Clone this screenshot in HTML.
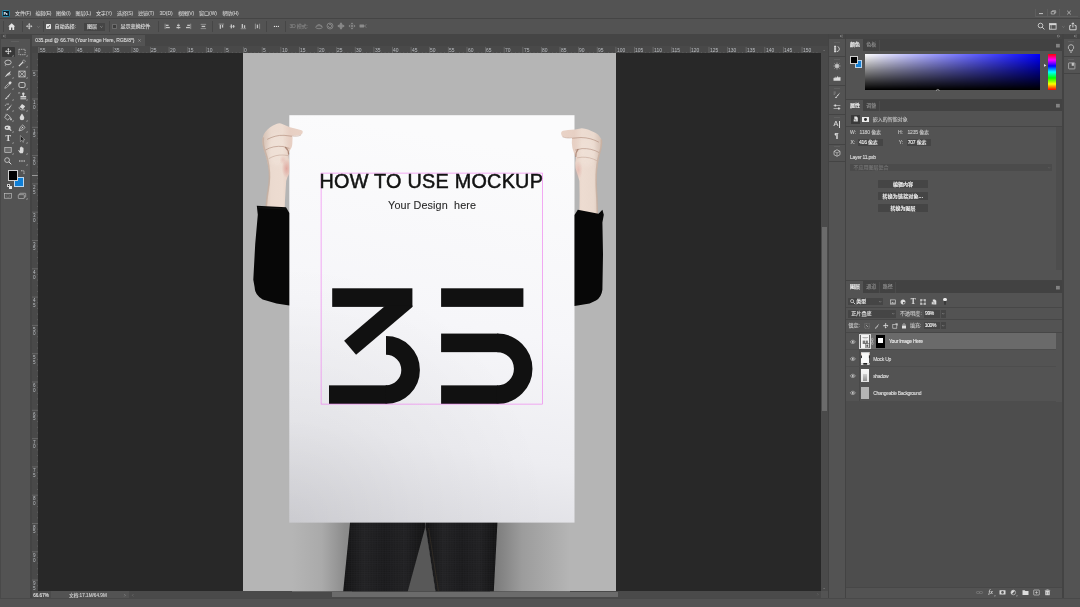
<!DOCTYPE html>
<html lang="zh-CN"><head><meta charset="utf-8"><title>035.psd</title>
<style>
html,body{margin:0;padding:0}
body{width:1080px;height:607px;overflow:hidden;background:#535353;position:relative;font-family:"Liberation Sans","Noto Sans CJK SC",sans-serif;font-size:5px;color:#d8d8d8;-webkit-font-smoothing:antialiased}
#app{position:absolute;left:0;top:0;width:1080px;height:607px;opacity:0.999}
.t{position:absolute;white-space:pre;line-height:10px;height:10px;-webkit-text-stroke:0.12px currentColor}
svg{overflow:visible}
</style></head>
<body>
<div id="app">
<div style="position:absolute;left:0.00px;top:0.00px;width:1080.00px;height:607.00px;background:#535353;"></div><div style="position:absolute;left:2.2px;top:10.0px;width:5.5px;height:5.3px;border:0.75px solid #2688ab;border-radius:1.3px;background:#0a1f2b"></div><div class="t" style="left:3.75px;top:8.70px;font-size:3.10px;color:#eef8ff;font-weight:bold;">Ps</div><div class="t" style="left:15.00px;top:8.10px;font-size:5.05px;color:#d6d6d6;letter-spacing:-0.109px;-webkit-text-stroke:0.05px currentColor;">文件(F)</div><div class="t" style="left:35.50px;top:8.10px;font-size:5.05px;color:#d6d6d6;letter-spacing:-0.206px;-webkit-text-stroke:0.05px currentColor;">编辑(E)</div><div class="t" style="left:56.00px;top:8.10px;font-size:5.05px;color:#d6d6d6;letter-spacing:-0.052px;-webkit-text-stroke:0.05px currentColor;">图像(I)</div><div class="t" style="left:75.50px;top:8.10px;font-size:5.05px;color:#d6d6d6;letter-spacing:-0.153px;-webkit-text-stroke:0.05px currentColor;">图层(L)</div><div class="t" style="left:96.00px;top:8.10px;font-size:5.05px;color:#d6d6d6;letter-spacing:-0.206px;-webkit-text-stroke:0.05px currentColor;">文字(Y)</div><div class="t" style="left:117.00px;top:8.10px;font-size:5.05px;color:#d6d6d6;letter-spacing:-0.166px;-webkit-text-stroke:0.05px currentColor;">选择(S)</div><div class="t" style="left:138.00px;top:8.10px;font-size:5.05px;color:#d6d6d6;letter-spacing:-0.109px;-webkit-text-stroke:0.05px currentColor;">滤镜(T)</div><div class="t" style="left:159.60px;top:8.10px;font-size:5.05px;color:#d6d6d6;letter-spacing:-0.094px;-webkit-text-stroke:0.05px currentColor;">3D(D)</div><div class="t" style="left:178.00px;top:8.10px;font-size:5.05px;color:#d6d6d6;letter-spacing:-0.166px;-webkit-text-stroke:0.05px currentColor;">视图(V)</div><div class="t" style="left:199.00px;top:8.10px;font-size:5.05px;color:#d6d6d6;letter-spacing:-0.044px;-webkit-text-stroke:0.05px currentColor;">窗口(W)</div><div class="t" style="left:222.20px;top:8.10px;font-size:5.05px;color:#d6d6d6;letter-spacing:-0.162px;-webkit-text-stroke:0.05px currentColor;">帮助(H)</div><div style="position:absolute;left:1035.30px;top:8.50px;width:0.60px;height:8.00px;background:#5e5e5e;"></div><div style="position:absolute;left:1047.20px;top:8.50px;width:0.60px;height:8.00px;background:#5e5e5e;"></div><div style="position:absolute;left:1058.60px;top:8.50px;width:0.60px;height:8.00px;background:#5e5e5e;"></div><div style="position:absolute;left:1035.30px;top:16.20px;width:43.00px;height:0.60px;background:#5e5e5e;"></div><svg style="position:absolute;left:1036.00px;top:8.00px;" width="44.00" height="9.00" viewBox="0 0 44 9"><path d="M3 5.6h4" stroke="#d0d0d0" stroke-width="0.9" fill="none"/><path d="M15.2 3.6h3.4v2.4h-3.4z M16.4 3.6v-0.9h3.3v2.3h-1.1" stroke="#d0d0d0" stroke-width="0.6" fill="none"/><path d="M31.2 2.8l3.6 3.6m0-3.6l-3.6 3.6" stroke="#d0d0d0" stroke-width="0.7" fill="none"/></svg><div style="position:absolute;left:0.00px;top:17.60px;width:1080.00px;height:0.90px;background:#454545;"></div><div style="position:absolute;left:3.00px;top:21.00px;width:0.70px;height:11.00px;background:#464646;"></div><div style="position:absolute;left:22.00px;top:21.00px;width:0.70px;height:11.00px;background:#464646;"></div><div style="position:absolute;left:42.90px;top:21.00px;width:0.70px;height:11.00px;background:#464646;"></div><div style="position:absolute;left:108.70px;top:21.00px;width:0.70px;height:11.00px;background:#464646;"></div><div style="position:absolute;left:157.70px;top:21.00px;width:0.70px;height:11.00px;background:#464646;"></div><div style="position:absolute;left:212.30px;top:21.00px;width:0.70px;height:11.00px;background:#464646;"></div><div style="position:absolute;left:266.00px;top:21.00px;width:0.70px;height:11.00px;background:#464646;"></div><div style="position:absolute;left:284.90px;top:21.00px;width:0.70px;height:11.00px;background:#464646;"></div><svg style="position:absolute;left:8.40px;top:22.80px;" width="7.40" height="7.20" viewBox="0 0 7.4 7.2"><path d="M3.7 0.3L0.2 3.5h1v3.4h1.8V4.6h1.4v2.3h1.8V3.5h1z" fill="#e4e4e4"/></svg><svg style="position:absolute;left:25.90px;top:23.30px;" width="6.40" height="6.40" viewBox="0 0 8 8"><path d="M4 0L5.500 1.900H4.500V3.500H6.100V2.500L8 4L6.100 5.500V4.500H4.500V6.100H5.500L4 8L2.500 6.100H3.500V4.500H1.900V5.500L0 4L1.900 2.500V3.500H3.500V1.900H2.500Z" fill="#d2d2d2"/></svg><svg style="position:absolute;left:36.60px;top:25.60px;" width="3.00" height="2.00" viewBox="0 0 3 2"><path d="M0.2 0.3l1.3 1.3 1.3-1.3" stroke="#8a8a8a" stroke-width="0.55" fill="none"/></svg><div style="position:absolute;left:46.30px;top:24.30px;width:4.70px;height:4.70px;background:#e6e6e6;border-radius:0.7px"></div><svg style="position:absolute;left:46.30px;top:24.30px;" width="4.70" height="4.70" viewBox="0 0 4.7 4.7"><path d="M1 2.5l1.1 1.1L3.8 1.2" stroke="#3a3a3a" stroke-width="0.9" fill="none"/></svg><div class="t" style="left:54.50px;top:20.80px;font-size:5.10px;color:#dcdcdc;letter-spacing:-0.099px;">自动选择:</div><div style="position:absolute;left:84.00px;top:22.90px;width:20.60px;height:7.80px;background:#454545;border-radius:0.6px"></div><div class="t" style="left:87.00px;top:20.80px;font-size:5.10px;color:#dcdcdc;">图层</div><svg style="position:absolute;left:100.40px;top:26.00px;" width="3.00" height="2.00" viewBox="0 0 3 2"><path d="M0.3 0.3l1.1 1.1 1.1-1.1" stroke="#bdbdbd" stroke-width="0.55" fill="none"/></svg><div style="position:absolute;left:112.30px;top:24.20px;width:4.90px;height:4.80px;background:#3d3d3d;border:0.5px solid #6c6c6c;box-sizing:border-box;border-radius:0.6px"></div><div class="t" style="left:120.50px;top:20.80px;font-size:5.10px;color:#dcdcdc;letter-spacing:-0.130px;">显示变换控件</div><svg style="position:absolute;left:163.90px;top:23.10px;" width="6.80" height="6.80" viewBox="0 0 8 8"><path d="M1.3 0.8v6.4" stroke="#c6c6c6" stroke-width="0.6"/><rect x="2.2" y="2" width="3.2" height="1.5" fill="#c6c6c6"/><rect x="2.2" y="4.6" width="4.6" height="1.5" fill="#c6c6c6"/></svg><svg style="position:absolute;left:174.60px;top:23.10px;" width="6.80" height="6.80" viewBox="0 0 8 8"><path d="M4 0.8v6.4" stroke="#c6c6c6" stroke-width="0.6"/><rect x="2.4" y="2" width="3.2" height="1.5" fill="#c6c6c6"/><rect x="1.7" y="4.6" width="4.6" height="1.5" fill="#c6c6c6"/></svg><svg style="position:absolute;left:185.30px;top:23.10px;" width="6.80" height="6.80" viewBox="0 0 8 8"><path d="M6.7 0.8v6.4" stroke="#c6c6c6" stroke-width="0.6"/><rect x="2.6" y="2" width="3.2" height="1.5" fill="#c6c6c6"/><rect x="1.2" y="4.6" width="4.6" height="1.5" fill="#c6c6c6"/></svg><svg style="position:absolute;left:200.00px;top:23.10px;" width="6.80" height="6.80" viewBox="0 0 8 8"><path d="M0.8 1.6h6.4M0.8 6.6h6.4" stroke="#c6c6c6" stroke-width="0.6"/><rect x="1.9" y="3.3" width="4.2" height="1.5" fill="#c6c6c6"/></svg><svg style="position:absolute;left:218.00px;top:23.10px;" width="6.80" height="6.80" viewBox="0 0 8 8"><path d="M0.8 1.3h6.4" stroke="#c6c6c6" stroke-width="0.6"/><rect x="2" y="2.2" width="1.5" height="4.6" fill="#c6c6c6"/><rect x="4.6" y="2.2" width="1.5" height="3.2" fill="#c6c6c6"/></svg><svg style="position:absolute;left:229.00px;top:23.10px;" width="6.80" height="6.80" viewBox="0 0 8 8"><path d="M0.8 4h6.4" stroke="#c6c6c6" stroke-width="0.6"/><rect x="2" y="1.7" width="1.5" height="4.6" fill="#c6c6c6"/><rect x="4.6" y="2.4" width="1.5" height="3.2" fill="#c6c6c6"/></svg><svg style="position:absolute;left:239.80px;top:23.10px;" width="6.80" height="6.80" viewBox="0 0 8 8"><path d="M0.8 6.7h6.4" stroke="#c6c6c6" stroke-width="0.6"/><rect x="2" y="1.2" width="1.5" height="4.6" fill="#c6c6c6"/><rect x="4.6" y="2.6" width="1.5" height="3.2" fill="#c6c6c6"/></svg><svg style="position:absolute;left:254.40px;top:23.10px;" width="6.80" height="6.80" viewBox="0 0 8 8"><path d="M1.6 0.8v6.4M6.6 0.8v6.4" stroke="#c6c6c6" stroke-width="0.6"/><rect x="3.3" y="1.9" width="1.5" height="4.2" fill="#c6c6c6"/></svg><svg style="position:absolute;left:272.50px;top:23.10px;" width="6.80" height="6.80" viewBox="0 0 8 8"><circle cx="1.7" cy="4" r="0.75" fill="#e8e8e8"/><circle cx="4" cy="4" r="0.75" fill="#e8e8e8"/><circle cx="6.3" cy="4" r="0.75" fill="#e8e8e8"/></svg><div class="t" style="left:289.40px;top:20.80px;font-size:5.10px;color:#838383;letter-spacing:-0.222px;">3D 模式:</div><svg style="position:absolute;left:314.80px;top:22.40px;" width="8.00" height="8.00" viewBox="0 0 8 8"><ellipse cx="4" cy="5.200" rx="3.300" ry="1.500" fill="none" stroke="#8c8c8c" stroke-width="0.8"/><path d="M1.600 4.300A2.500 2.500 0 0 1 6.400 4.300" fill="none" stroke="#8c8c8c" stroke-width="0.8"/><path d="M6.800 3.200l0.600 1.600l-1.600 0z" fill="#8c8c8c"/></svg><svg style="position:absolute;left:325.80px;top:22.40px;" width="8.00" height="8.00" viewBox="0 0 8 8"><circle cx="4" cy="4" r="3" fill="none" stroke="#8c8c8c" stroke-width="0.8"/><path d="M2.300 4A1.700 1.700 0 1 0 4 2.300" fill="none" stroke="#8c8c8c" stroke-width="0.8"/><path d="M4.200 1.300l-1.300 1l1.300 1z" fill="#8c8c8c"/></svg><svg style="position:absolute;left:336.80px;top:22.40px;" width="8.00" height="8.00" viewBox="0 0 8 8"><path d="M4 0.300L5.700 2.400H4.800V3.200H5.600V2.300L7.700 4L5.600 5.700V4.800H4.800V5.600H5.700L4 7.700L2.300 5.600H3.200V4.800H2.400V5.700L0.300 4L2.400 2.300V3.200H3.200V2.400H2.300Z" fill="#8c8c8c"/></svg><svg style="position:absolute;left:347.90px;top:22.40px;" width="8.00" height="8.00" viewBox="0 0 8 8"><path d="M4 0.500l1.500 1.700H2.500zM4 7.500l1.500-1.700H2.500zM0.500 4l1.700-1.500v3zM7.500 4L5.800 2.500v3z" fill="#8c8c8c"/><circle cx="4" cy="4" r="1" fill="#8c8c8c"/></svg><svg style="position:absolute;left:358.90px;top:22.40px;" width="8.00" height="8.00" viewBox="0 0 8 8"><rect x="0.500" y="2.600" width="4.600" height="2.900" rx="0.4" fill="#8c8c8c"/><path d="M5.300 4l2.200-1.500M5.300 4l2.200 1.500" fill="none" stroke="#8c8c8c" stroke-width="0.6"/></svg><svg style="position:absolute;left:1036.50px;top:22.40px;" width="8.50" height="8.50" viewBox="0 0 8.5 8.5"><circle cx="3.5" cy="3.5" r="2.3" fill="none" stroke="#dedede" stroke-width="0.8"/><path d="M5.2 5.2l2.2 2.2" stroke="#dedede" stroke-width="0.9"/></svg><svg style="position:absolute;left:1049.40px;top:23.00px;" width="8.00" height="7.50" viewBox="0 0 8 7.5"><rect x="0.5" y="0.6" width="6.6" height="5.6" fill="none" stroke="#dedede" stroke-width="0.8"/><path d="M0.5 1.6h6.6" stroke="#dedede" stroke-width="1.1"/><path d="M2.2 1.6v4.6" stroke="#dedede" stroke-width="0.5"/></svg><svg style="position:absolute;left:1061.60px;top:26.00px;" width="3.00" height="2.00" viewBox="0 0 3 2"><path d="M0.3 0.3l1.1 1.1 1.1-1.1" stroke="#8a8a8a" stroke-width="0.55" fill="none"/></svg><svg style="position:absolute;left:1068.60px;top:22.00px;" width="8.00" height="8.60" viewBox="0 0 8 8.6"><path d="M2.2 3.6H0.7v4.2h6.4V3.6H5.6" fill="none" stroke="#e6e6e6" stroke-width="0.85"/><path d="M3.9 5.4V0.9M2.5 2.2l1.4-1.4 1.4 1.4" fill="none" stroke="#e6e6e6" stroke-width="0.85"/></svg><div style="position:absolute;left:0.00px;top:33.90px;width:1080.00px;height:5.00px;background:#454545;"></div><div style="position:absolute;left:31.50px;top:33.90px;width:797.00px;height:12.80px;background:#454545;"></div><svg style="position:absolute;left:3.00px;top:35.30px;" width="2.80" height="2.20" viewBox="0 0 2.8 2.2"><path d="M1.2 0L0 1.1 1.2 2.2M2.7 0L1.5 1.1 2.7 2.2" stroke="#b4b4b4" stroke-width="0.5" fill="none"/></svg><svg style="position:absolute;left:839.60px;top:35.30px;" width="2.80" height="2.20" viewBox="0 0 2.8 2.2"><path d="M1.2 0L0 1.1 1.2 2.2M2.7 0L1.5 1.1 2.7 2.2" stroke="#b4b4b4" stroke-width="0.5" fill="none"/></svg><svg style="position:absolute;left:1057.20px;top:35.30px;" width="2.80" height="2.20" viewBox="0 0 2.8 2.2"><path d="M0 0l1.2 1.1L0 2.2M1.5 0l1.2 1.1-1.2 1.1" stroke="#b4b4b4" stroke-width="0.5" fill="none"/></svg><svg style="position:absolute;left:1074.20px;top:35.30px;" width="2.80" height="2.20" viewBox="0 0 2.8 2.2"><path d="M1.2 0L0 1.1 1.2 2.2M2.7 0L1.5 1.1 2.7 2.2" stroke="#b4b4b4" stroke-width="0.5" fill="none"/></svg><div style="position:absolute;left:32.20px;top:34.90px;width:112.40px;height:11.80px;background:#535353;"></div><div class="t" style="left:35.20px;top:35.20px;font-size:5.00px;color:#dadada;letter-spacing:-0.066px;">035.psd @ 66.7% (Your Image Here, RGB/8*)</div><svg style="position:absolute;left:137.60px;top:39.30px;" width="3.00" height="3.00" viewBox="0 0 3 3"><path d="M0.3 0.3l2.3 2.3m0-2.3L0.3 2.6" stroke="#b8b8b8" stroke-width="0.5"/></svg><div style="position:absolute;left:31.50px;top:46.70px;width:797.00px;height:6.70px;background:#494949;"></div><div style="position:absolute;left:31.50px;top:53.40px;width:6.70px;height:538.00px;background:#494949;"></div><div style="position:absolute;left:31.50px;top:46.70px;width:6.20px;height:6.40px;background:#464646;"></div><div style="position:absolute;left:31.50px;top:46.40px;width:797.00px;height:0.50px;background:#494949;"></div><svg style="position:absolute;left:0;top:0" width="1080" height="60"><path d="M38.84 46.9v6.4" stroke="#8b8b8b" stroke-width="0.45"/><path d="M42.56 52.2v1.1" stroke="#7c7c7c" stroke-width="0.45"/><path d="M46.28 52.2v1.1" stroke="#7c7c7c" stroke-width="0.45"/><path d="M50.00 52.2v1.1" stroke="#7c7c7c" stroke-width="0.45"/><path d="M53.73 52.2v1.1" stroke="#7c7c7c" stroke-width="0.45"/><path d="M57.45 46.9v6.4" stroke="#8b8b8b" stroke-width="0.45"/><path d="M61.17 52.2v1.1" stroke="#7c7c7c" stroke-width="0.45"/><path d="M64.90 52.2v1.1" stroke="#7c7c7c" stroke-width="0.45"/><path d="M68.62 52.2v1.1" stroke="#7c7c7c" stroke-width="0.45"/><path d="M72.34 52.2v1.1" stroke="#7c7c7c" stroke-width="0.45"/><path d="M76.06 46.9v6.4" stroke="#8b8b8b" stroke-width="0.45"/><path d="M79.79 52.2v1.1" stroke="#7c7c7c" stroke-width="0.45"/><path d="M83.51 52.2v1.1" stroke="#7c7c7c" stroke-width="0.45"/><path d="M87.23 52.2v1.1" stroke="#7c7c7c" stroke-width="0.45"/><path d="M90.96 52.2v1.1" stroke="#7c7c7c" stroke-width="0.45"/><path d="M94.68 46.9v6.4" stroke="#8b8b8b" stroke-width="0.45"/><path d="M98.40 52.2v1.1" stroke="#7c7c7c" stroke-width="0.45"/><path d="M102.13 52.2v1.1" stroke="#7c7c7c" stroke-width="0.45"/><path d="M105.85 52.2v1.1" stroke="#7c7c7c" stroke-width="0.45"/><path d="M109.57 52.2v1.1" stroke="#7c7c7c" stroke-width="0.45"/><path d="M113.29 46.9v6.4" stroke="#8b8b8b" stroke-width="0.45"/><path d="M117.02 52.2v1.1" stroke="#7c7c7c" stroke-width="0.45"/><path d="M120.74 52.2v1.1" stroke="#7c7c7c" stroke-width="0.45"/><path d="M124.46 52.2v1.1" stroke="#7c7c7c" stroke-width="0.45"/><path d="M128.19 52.2v1.1" stroke="#7c7c7c" stroke-width="0.45"/><path d="M131.91 46.9v6.4" stroke="#8b8b8b" stroke-width="0.45"/><path d="M135.63 52.2v1.1" stroke="#7c7c7c" stroke-width="0.45"/><path d="M139.36 52.2v1.1" stroke="#7c7c7c" stroke-width="0.45"/><path d="M143.08 52.2v1.1" stroke="#7c7c7c" stroke-width="0.45"/><path d="M146.80 52.2v1.1" stroke="#7c7c7c" stroke-width="0.45"/><path d="M150.52 46.9v6.4" stroke="#8b8b8b" stroke-width="0.45"/><path d="M154.25 52.2v1.1" stroke="#7c7c7c" stroke-width="0.45"/><path d="M157.97 52.2v1.1" stroke="#7c7c7c" stroke-width="0.45"/><path d="M161.69 52.2v1.1" stroke="#7c7c7c" stroke-width="0.45"/><path d="M165.42 52.2v1.1" stroke="#7c7c7c" stroke-width="0.45"/><path d="M169.14 46.9v6.4" stroke="#8b8b8b" stroke-width="0.45"/><path d="M172.86 52.2v1.1" stroke="#7c7c7c" stroke-width="0.45"/><path d="M176.59 52.2v1.1" stroke="#7c7c7c" stroke-width="0.45"/><path d="M180.31 52.2v1.1" stroke="#7c7c7c" stroke-width="0.45"/><path d="M184.03 52.2v1.1" stroke="#7c7c7c" stroke-width="0.45"/><path d="M187.75 46.9v6.4" stroke="#8b8b8b" stroke-width="0.45"/><path d="M191.48 52.2v1.1" stroke="#7c7c7c" stroke-width="0.45"/><path d="M195.20 52.2v1.1" stroke="#7c7c7c" stroke-width="0.45"/><path d="M198.92 52.2v1.1" stroke="#7c7c7c" stroke-width="0.45"/><path d="M202.65 52.2v1.1" stroke="#7c7c7c" stroke-width="0.45"/><path d="M206.37 46.9v6.4" stroke="#8b8b8b" stroke-width="0.45"/><path d="M210.09 52.2v1.1" stroke="#7c7c7c" stroke-width="0.45"/><path d="M213.82 52.2v1.1" stroke="#7c7c7c" stroke-width="0.45"/><path d="M217.54 52.2v1.1" stroke="#7c7c7c" stroke-width="0.45"/><path d="M221.26 52.2v1.1" stroke="#7c7c7c" stroke-width="0.45"/><path d="M224.98 46.9v6.4" stroke="#8b8b8b" stroke-width="0.45"/><path d="M228.71 52.2v1.1" stroke="#7c7c7c" stroke-width="0.45"/><path d="M232.43 52.2v1.1" stroke="#7c7c7c" stroke-width="0.45"/><path d="M236.15 52.2v1.1" stroke="#7c7c7c" stroke-width="0.45"/><path d="M239.88 52.2v1.1" stroke="#7c7c7c" stroke-width="0.45"/><path d="M243.60 46.9v6.4" stroke="#8b8b8b" stroke-width="0.45"/><path d="M247.32 52.2v1.1" stroke="#7c7c7c" stroke-width="0.45"/><path d="M251.05 52.2v1.1" stroke="#7c7c7c" stroke-width="0.45"/><path d="M254.77 52.2v1.1" stroke="#7c7c7c" stroke-width="0.45"/><path d="M258.49 52.2v1.1" stroke="#7c7c7c" stroke-width="0.45"/><path d="M262.21 46.9v6.4" stroke="#8b8b8b" stroke-width="0.45"/><path d="M265.94 52.2v1.1" stroke="#7c7c7c" stroke-width="0.45"/><path d="M269.66 52.2v1.1" stroke="#7c7c7c" stroke-width="0.45"/><path d="M273.38 52.2v1.1" stroke="#7c7c7c" stroke-width="0.45"/><path d="M277.11 52.2v1.1" stroke="#7c7c7c" stroke-width="0.45"/><path d="M280.83 46.9v6.4" stroke="#8b8b8b" stroke-width="0.45"/><path d="M284.55 52.2v1.1" stroke="#7c7c7c" stroke-width="0.45"/><path d="M288.28 52.2v1.1" stroke="#7c7c7c" stroke-width="0.45"/><path d="M292.00 52.2v1.1" stroke="#7c7c7c" stroke-width="0.45"/><path d="M295.72 52.2v1.1" stroke="#7c7c7c" stroke-width="0.45"/><path d="M299.44 46.9v6.4" stroke="#8b8b8b" stroke-width="0.45"/><path d="M303.17 52.2v1.1" stroke="#7c7c7c" stroke-width="0.45"/><path d="M306.89 52.2v1.1" stroke="#7c7c7c" stroke-width="0.45"/><path d="M310.61 52.2v1.1" stroke="#7c7c7c" stroke-width="0.45"/><path d="M314.34 52.2v1.1" stroke="#7c7c7c" stroke-width="0.45"/><path d="M318.06 46.9v6.4" stroke="#8b8b8b" stroke-width="0.45"/><path d="M321.78 52.2v1.1" stroke="#7c7c7c" stroke-width="0.45"/><path d="M325.51 52.2v1.1" stroke="#7c7c7c" stroke-width="0.45"/><path d="M329.23 52.2v1.1" stroke="#7c7c7c" stroke-width="0.45"/><path d="M332.95 52.2v1.1" stroke="#7c7c7c" stroke-width="0.45"/><path d="M336.68 46.9v6.4" stroke="#8b8b8b" stroke-width="0.45"/><path d="M340.40 52.2v1.1" stroke="#7c7c7c" stroke-width="0.45"/><path d="M344.12 52.2v1.1" stroke="#7c7c7c" stroke-width="0.45"/><path d="M347.84 52.2v1.1" stroke="#7c7c7c" stroke-width="0.45"/><path d="M351.57 52.2v1.1" stroke="#7c7c7c" stroke-width="0.45"/><path d="M355.29 46.9v6.4" stroke="#8b8b8b" stroke-width="0.45"/><path d="M359.01 52.2v1.1" stroke="#7c7c7c" stroke-width="0.45"/><path d="M362.74 52.2v1.1" stroke="#7c7c7c" stroke-width="0.45"/><path d="M366.46 52.2v1.1" stroke="#7c7c7c" stroke-width="0.45"/><path d="M370.18 52.2v1.1" stroke="#7c7c7c" stroke-width="0.45"/><path d="M373.90 46.9v6.4" stroke="#8b8b8b" stroke-width="0.45"/><path d="M377.63 52.2v1.1" stroke="#7c7c7c" stroke-width="0.45"/><path d="M381.35 52.2v1.1" stroke="#7c7c7c" stroke-width="0.45"/><path d="M385.07 52.2v1.1" stroke="#7c7c7c" stroke-width="0.45"/><path d="M388.80 52.2v1.1" stroke="#7c7c7c" stroke-width="0.45"/><path d="M392.52 46.9v6.4" stroke="#8b8b8b" stroke-width="0.45"/><path d="M396.24 52.2v1.1" stroke="#7c7c7c" stroke-width="0.45"/><path d="M399.97 52.2v1.1" stroke="#7c7c7c" stroke-width="0.45"/><path d="M403.69 52.2v1.1" stroke="#7c7c7c" stroke-width="0.45"/><path d="M407.41 52.2v1.1" stroke="#7c7c7c" stroke-width="0.45"/><path d="M411.13 46.9v6.4" stroke="#8b8b8b" stroke-width="0.45"/><path d="M414.86 52.2v1.1" stroke="#7c7c7c" stroke-width="0.45"/><path d="M418.58 52.2v1.1" stroke="#7c7c7c" stroke-width="0.45"/><path d="M422.30 52.2v1.1" stroke="#7c7c7c" stroke-width="0.45"/><path d="M426.03 52.2v1.1" stroke="#7c7c7c" stroke-width="0.45"/><path d="M429.75 46.9v6.4" stroke="#8b8b8b" stroke-width="0.45"/><path d="M433.47 52.2v1.1" stroke="#7c7c7c" stroke-width="0.45"/><path d="M437.20 52.2v1.1" stroke="#7c7c7c" stroke-width="0.45"/><path d="M440.92 52.2v1.1" stroke="#7c7c7c" stroke-width="0.45"/><path d="M444.64 52.2v1.1" stroke="#7c7c7c" stroke-width="0.45"/><path d="M448.37 46.9v6.4" stroke="#8b8b8b" stroke-width="0.45"/><path d="M452.09 52.2v1.1" stroke="#7c7c7c" stroke-width="0.45"/><path d="M455.81 52.2v1.1" stroke="#7c7c7c" stroke-width="0.45"/><path d="M459.53 52.2v1.1" stroke="#7c7c7c" stroke-width="0.45"/><path d="M463.26 52.2v1.1" stroke="#7c7c7c" stroke-width="0.45"/><path d="M466.98 46.9v6.4" stroke="#8b8b8b" stroke-width="0.45"/><path d="M470.70 52.2v1.1" stroke="#7c7c7c" stroke-width="0.45"/><path d="M474.43 52.2v1.1" stroke="#7c7c7c" stroke-width="0.45"/><path d="M478.15 52.2v1.1" stroke="#7c7c7c" stroke-width="0.45"/><path d="M481.87 52.2v1.1" stroke="#7c7c7c" stroke-width="0.45"/><path d="M485.60 46.9v6.4" stroke="#8b8b8b" stroke-width="0.45"/><path d="M489.32 52.2v1.1" stroke="#7c7c7c" stroke-width="0.45"/><path d="M493.04 52.2v1.1" stroke="#7c7c7c" stroke-width="0.45"/><path d="M496.76 52.2v1.1" stroke="#7c7c7c" stroke-width="0.45"/><path d="M500.49 52.2v1.1" stroke="#7c7c7c" stroke-width="0.45"/><path d="M504.21 46.9v6.4" stroke="#8b8b8b" stroke-width="0.45"/><path d="M507.93 52.2v1.1" stroke="#7c7c7c" stroke-width="0.45"/><path d="M511.66 52.2v1.1" stroke="#7c7c7c" stroke-width="0.45"/><path d="M515.38 52.2v1.1" stroke="#7c7c7c" stroke-width="0.45"/><path d="M519.10 52.2v1.1" stroke="#7c7c7c" stroke-width="0.45"/><path d="M522.82 46.9v6.4" stroke="#8b8b8b" stroke-width="0.45"/><path d="M526.55 52.2v1.1" stroke="#7c7c7c" stroke-width="0.45"/><path d="M530.27 52.2v1.1" stroke="#7c7c7c" stroke-width="0.45"/><path d="M533.99 52.2v1.1" stroke="#7c7c7c" stroke-width="0.45"/><path d="M537.72 52.2v1.1" stroke="#7c7c7c" stroke-width="0.45"/><path d="M541.44 46.9v6.4" stroke="#8b8b8b" stroke-width="0.45"/><path d="M545.16 52.2v1.1" stroke="#7c7c7c" stroke-width="0.45"/><path d="M548.89 52.2v1.1" stroke="#7c7c7c" stroke-width="0.45"/><path d="M552.61 52.2v1.1" stroke="#7c7c7c" stroke-width="0.45"/><path d="M556.33 52.2v1.1" stroke="#7c7c7c" stroke-width="0.45"/><path d="M560.05 46.9v6.4" stroke="#8b8b8b" stroke-width="0.45"/><path d="M563.78 52.2v1.1" stroke="#7c7c7c" stroke-width="0.45"/><path d="M567.50 52.2v1.1" stroke="#7c7c7c" stroke-width="0.45"/><path d="M571.22 52.2v1.1" stroke="#7c7c7c" stroke-width="0.45"/><path d="M574.95 52.2v1.1" stroke="#7c7c7c" stroke-width="0.45"/><path d="M578.67 46.9v6.4" stroke="#8b8b8b" stroke-width="0.45"/><path d="M582.39 52.2v1.1" stroke="#7c7c7c" stroke-width="0.45"/><path d="M586.12 52.2v1.1" stroke="#7c7c7c" stroke-width="0.45"/><path d="M589.84 52.2v1.1" stroke="#7c7c7c" stroke-width="0.45"/><path d="M593.56 52.2v1.1" stroke="#7c7c7c" stroke-width="0.45"/><path d="M597.28 46.9v6.4" stroke="#8b8b8b" stroke-width="0.45"/><path d="M601.01 52.2v1.1" stroke="#7c7c7c" stroke-width="0.45"/><path d="M604.73 52.2v1.1" stroke="#7c7c7c" stroke-width="0.45"/><path d="M608.45 52.2v1.1" stroke="#7c7c7c" stroke-width="0.45"/><path d="M612.18 52.2v1.1" stroke="#7c7c7c" stroke-width="0.45"/><path d="M615.90 46.9v6.4" stroke="#8b8b8b" stroke-width="0.45"/><path d="M619.62 52.2v1.1" stroke="#7c7c7c" stroke-width="0.45"/><path d="M623.35 52.2v1.1" stroke="#7c7c7c" stroke-width="0.45"/><path d="M627.07 52.2v1.1" stroke="#7c7c7c" stroke-width="0.45"/><path d="M630.79 52.2v1.1" stroke="#7c7c7c" stroke-width="0.45"/><path d="M634.51 46.9v6.4" stroke="#8b8b8b" stroke-width="0.45"/><path d="M638.24 52.2v1.1" stroke="#7c7c7c" stroke-width="0.45"/><path d="M641.96 52.2v1.1" stroke="#7c7c7c" stroke-width="0.45"/><path d="M645.68 52.2v1.1" stroke="#7c7c7c" stroke-width="0.45"/><path d="M649.41 52.2v1.1" stroke="#7c7c7c" stroke-width="0.45"/><path d="M653.13 46.9v6.4" stroke="#8b8b8b" stroke-width="0.45"/><path d="M656.85 52.2v1.1" stroke="#7c7c7c" stroke-width="0.45"/><path d="M660.58 52.2v1.1" stroke="#7c7c7c" stroke-width="0.45"/><path d="M664.30 52.2v1.1" stroke="#7c7c7c" stroke-width="0.45"/><path d="M668.02 52.2v1.1" stroke="#7c7c7c" stroke-width="0.45"/><path d="M671.75 46.9v6.4" stroke="#8b8b8b" stroke-width="0.45"/><path d="M675.47 52.2v1.1" stroke="#7c7c7c" stroke-width="0.45"/><path d="M679.19 52.2v1.1" stroke="#7c7c7c" stroke-width="0.45"/><path d="M682.91 52.2v1.1" stroke="#7c7c7c" stroke-width="0.45"/><path d="M686.64 52.2v1.1" stroke="#7c7c7c" stroke-width="0.45"/><path d="M690.36 46.9v6.4" stroke="#8b8b8b" stroke-width="0.45"/><path d="M694.08 52.2v1.1" stroke="#7c7c7c" stroke-width="0.45"/><path d="M697.81 52.2v1.1" stroke="#7c7c7c" stroke-width="0.45"/><path d="M701.53 52.2v1.1" stroke="#7c7c7c" stroke-width="0.45"/><path d="M705.25 52.2v1.1" stroke="#7c7c7c" stroke-width="0.45"/><path d="M708.98 46.9v6.4" stroke="#8b8b8b" stroke-width="0.45"/><path d="M712.70 52.2v1.1" stroke="#7c7c7c" stroke-width="0.45"/><path d="M716.42 52.2v1.1" stroke="#7c7c7c" stroke-width="0.45"/><path d="M720.14 52.2v1.1" stroke="#7c7c7c" stroke-width="0.45"/><path d="M723.87 52.2v1.1" stroke="#7c7c7c" stroke-width="0.45"/><path d="M727.59 46.9v6.4" stroke="#8b8b8b" stroke-width="0.45"/><path d="M731.31 52.2v1.1" stroke="#7c7c7c" stroke-width="0.45"/><path d="M735.04 52.2v1.1" stroke="#7c7c7c" stroke-width="0.45"/><path d="M738.76 52.2v1.1" stroke="#7c7c7c" stroke-width="0.45"/><path d="M742.48 52.2v1.1" stroke="#7c7c7c" stroke-width="0.45"/><path d="M746.20 46.9v6.4" stroke="#8b8b8b" stroke-width="0.45"/><path d="M749.93 52.2v1.1" stroke="#7c7c7c" stroke-width="0.45"/><path d="M753.65 52.2v1.1" stroke="#7c7c7c" stroke-width="0.45"/><path d="M757.37 52.2v1.1" stroke="#7c7c7c" stroke-width="0.45"/><path d="M761.10 52.2v1.1" stroke="#7c7c7c" stroke-width="0.45"/><path d="M764.82 46.9v6.4" stroke="#8b8b8b" stroke-width="0.45"/><path d="M768.54 52.2v1.1" stroke="#7c7c7c" stroke-width="0.45"/><path d="M772.27 52.2v1.1" stroke="#7c7c7c" stroke-width="0.45"/><path d="M775.99 52.2v1.1" stroke="#7c7c7c" stroke-width="0.45"/><path d="M779.71 52.2v1.1" stroke="#7c7c7c" stroke-width="0.45"/><path d="M783.44 46.9v6.4" stroke="#8b8b8b" stroke-width="0.45"/><path d="M787.16 52.2v1.1" stroke="#7c7c7c" stroke-width="0.45"/><path d="M790.88 52.2v1.1" stroke="#7c7c7c" stroke-width="0.45"/><path d="M794.60 52.2v1.1" stroke="#7c7c7c" stroke-width="0.45"/><path d="M798.33 52.2v1.1" stroke="#7c7c7c" stroke-width="0.45"/><path d="M802.05 46.9v6.4" stroke="#8b8b8b" stroke-width="0.45"/><path d="M805.77 52.2v1.1" stroke="#7c7c7c" stroke-width="0.45"/><path d="M809.50 52.2v1.1" stroke="#7c7c7c" stroke-width="0.45"/><path d="M813.22 52.2v1.1" stroke="#7c7c7c" stroke-width="0.45"/><path d="M816.94 52.2v1.1" stroke="#7c7c7c" stroke-width="0.45"/></svg><div class="t" style="left:39.54px;top:45.30px;font-size:6.20px;color:#b9bcc0;transform:scaleX(0.8);transform-origin:0 50%;-webkit-text-stroke:0;">55</div><div class="t" style="left:58.15px;top:45.30px;font-size:6.20px;color:#b9bcc0;transform:scaleX(0.8);transform-origin:0 50%;-webkit-text-stroke:0;">50</div><div class="t" style="left:76.77px;top:45.30px;font-size:6.20px;color:#b9bcc0;transform:scaleX(0.8);transform-origin:0 50%;-webkit-text-stroke:0;">45</div><div class="t" style="left:95.38px;top:45.30px;font-size:6.20px;color:#b9bcc0;transform:scaleX(0.8);transform-origin:0 50%;-webkit-text-stroke:0;">40</div><div class="t" style="left:113.99px;top:45.30px;font-size:6.20px;color:#b9bcc0;transform:scaleX(0.8);transform-origin:0 50%;-webkit-text-stroke:0;">35</div><div class="t" style="left:132.61px;top:45.30px;font-size:6.20px;color:#b9bcc0;transform:scaleX(0.8);transform-origin:0 50%;-webkit-text-stroke:0;">30</div><div class="t" style="left:151.22px;top:45.30px;font-size:6.20px;color:#b9bcc0;transform:scaleX(0.8);transform-origin:0 50%;-webkit-text-stroke:0;">25</div><div class="t" style="left:169.84px;top:45.30px;font-size:6.20px;color:#b9bcc0;transform:scaleX(0.8);transform-origin:0 50%;-webkit-text-stroke:0;">20</div><div class="t" style="left:188.45px;top:45.30px;font-size:6.20px;color:#b9bcc0;transform:scaleX(0.8);transform-origin:0 50%;-webkit-text-stroke:0;">15</div><div class="t" style="left:207.07px;top:45.30px;font-size:6.20px;color:#b9bcc0;transform:scaleX(0.8);transform-origin:0 50%;-webkit-text-stroke:0;">10</div><div class="t" style="left:225.68px;top:45.30px;font-size:6.20px;color:#b9bcc0;transform:scaleX(0.8);transform-origin:0 50%;-webkit-text-stroke:0;">5</div><div class="t" style="left:244.30px;top:45.30px;font-size:6.20px;color:#b9bcc0;transform:scaleX(0.8);transform-origin:0 50%;-webkit-text-stroke:0;">0</div><div class="t" style="left:262.91px;top:45.30px;font-size:6.20px;color:#b9bcc0;transform:scaleX(0.8);transform-origin:0 50%;-webkit-text-stroke:0;">5</div><div class="t" style="left:281.53px;top:45.30px;font-size:6.20px;color:#b9bcc0;transform:scaleX(0.8);transform-origin:0 50%;-webkit-text-stroke:0;">10</div><div class="t" style="left:300.14px;top:45.30px;font-size:6.20px;color:#b9bcc0;transform:scaleX(0.8);transform-origin:0 50%;-webkit-text-stroke:0;">15</div><div class="t" style="left:318.76px;top:45.30px;font-size:6.20px;color:#b9bcc0;transform:scaleX(0.8);transform-origin:0 50%;-webkit-text-stroke:0;">20</div><div class="t" style="left:337.38px;top:45.30px;font-size:6.20px;color:#b9bcc0;transform:scaleX(0.8);transform-origin:0 50%;-webkit-text-stroke:0;">25</div><div class="t" style="left:355.99px;top:45.30px;font-size:6.20px;color:#b9bcc0;transform:scaleX(0.8);transform-origin:0 50%;-webkit-text-stroke:0;">30</div><div class="t" style="left:374.60px;top:45.30px;font-size:6.20px;color:#b9bcc0;transform:scaleX(0.8);transform-origin:0 50%;-webkit-text-stroke:0;">35</div><div class="t" style="left:393.22px;top:45.30px;font-size:6.20px;color:#b9bcc0;transform:scaleX(0.8);transform-origin:0 50%;-webkit-text-stroke:0;">40</div><div class="t" style="left:411.83px;top:45.30px;font-size:6.20px;color:#b9bcc0;transform:scaleX(0.8);transform-origin:0 50%;-webkit-text-stroke:0;">45</div><div class="t" style="left:430.45px;top:45.30px;font-size:6.20px;color:#b9bcc0;transform:scaleX(0.8);transform-origin:0 50%;-webkit-text-stroke:0;">50</div><div class="t" style="left:449.06px;top:45.30px;font-size:6.20px;color:#b9bcc0;transform:scaleX(0.8);transform-origin:0 50%;-webkit-text-stroke:0;">55</div><div class="t" style="left:467.68px;top:45.30px;font-size:6.20px;color:#b9bcc0;transform:scaleX(0.8);transform-origin:0 50%;-webkit-text-stroke:0;">60</div><div class="t" style="left:486.30px;top:45.30px;font-size:6.20px;color:#b9bcc0;transform:scaleX(0.8);transform-origin:0 50%;-webkit-text-stroke:0;">65</div><div class="t" style="left:504.91px;top:45.30px;font-size:6.20px;color:#b9bcc0;transform:scaleX(0.8);transform-origin:0 50%;-webkit-text-stroke:0;">70</div><div class="t" style="left:523.52px;top:45.30px;font-size:6.20px;color:#b9bcc0;transform:scaleX(0.8);transform-origin:0 50%;-webkit-text-stroke:0;">75</div><div class="t" style="left:542.14px;top:45.30px;font-size:6.20px;color:#b9bcc0;transform:scaleX(0.8);transform-origin:0 50%;-webkit-text-stroke:0;">80</div><div class="t" style="left:560.75px;top:45.30px;font-size:6.20px;color:#b9bcc0;transform:scaleX(0.8);transform-origin:0 50%;-webkit-text-stroke:0;">85</div><div class="t" style="left:579.37px;top:45.30px;font-size:6.20px;color:#b9bcc0;transform:scaleX(0.8);transform-origin:0 50%;-webkit-text-stroke:0;">90</div><div class="t" style="left:597.99px;top:45.30px;font-size:6.20px;color:#b9bcc0;transform:scaleX(0.8);transform-origin:0 50%;-webkit-text-stroke:0;">95</div><div class="t" style="left:616.60px;top:45.30px;font-size:6.20px;color:#b9bcc0;transform:scaleX(0.8);transform-origin:0 50%;-webkit-text-stroke:0;">100</div><div class="t" style="left:635.22px;top:45.30px;font-size:6.20px;color:#b9bcc0;transform:scaleX(0.8);transform-origin:0 50%;-webkit-text-stroke:0;">105</div><div class="t" style="left:653.83px;top:45.30px;font-size:6.20px;color:#b9bcc0;transform:scaleX(0.8);transform-origin:0 50%;-webkit-text-stroke:0;">110</div><div class="t" style="left:672.45px;top:45.30px;font-size:6.20px;color:#b9bcc0;transform:scaleX(0.8);transform-origin:0 50%;-webkit-text-stroke:0;">115</div><div class="t" style="left:691.06px;top:45.30px;font-size:6.20px;color:#b9bcc0;transform:scaleX(0.8);transform-origin:0 50%;-webkit-text-stroke:0;">120</div><div class="t" style="left:709.68px;top:45.30px;font-size:6.20px;color:#b9bcc0;transform:scaleX(0.8);transform-origin:0 50%;-webkit-text-stroke:0;">125</div><div class="t" style="left:728.29px;top:45.30px;font-size:6.20px;color:#b9bcc0;transform:scaleX(0.8);transform-origin:0 50%;-webkit-text-stroke:0;">130</div><div class="t" style="left:746.90px;top:45.30px;font-size:6.20px;color:#b9bcc0;transform:scaleX(0.8);transform-origin:0 50%;-webkit-text-stroke:0;">135</div><div class="t" style="left:765.52px;top:45.30px;font-size:6.20px;color:#b9bcc0;transform:scaleX(0.8);transform-origin:0 50%;-webkit-text-stroke:0;">140</div><div class="t" style="left:784.14px;top:45.30px;font-size:6.20px;color:#b9bcc0;transform:scaleX(0.8);transform-origin:0 50%;-webkit-text-stroke:0;">145</div><div class="t" style="left:802.75px;top:45.30px;font-size:6.20px;color:#b9bcc0;transform:scaleX(0.8);transform-origin:0 50%;-webkit-text-stroke:0;">150</div><svg style="position:absolute;left:822.80px;top:50.20px;" width="3.00" height="1.00" viewBox="0 0 3 1"><path d="M0.3 0.5h1.7" stroke="#8a8a8a" stroke-width="0.5"/></svg><svg style="position:absolute;left:0;top:0" width="60" height="607"><path d="M37 59.38h1.1" stroke="#7c7c7c" stroke-width="0.45"/><path d="M37 65.04h1.1" stroke="#7c7c7c" stroke-width="0.45"/><path d="M31.8 70.70h6.2" stroke="#8b8b8b" stroke-width="0.45"/><path d="M37 76.36h1.1" stroke="#7c7c7c" stroke-width="0.45"/><path d="M37 82.02h1.1" stroke="#7c7c7c" stroke-width="0.45"/><path d="M37 87.68h1.1" stroke="#7c7c7c" stroke-width="0.45"/><path d="M37 93.34h1.1" stroke="#7c7c7c" stroke-width="0.45"/><path d="M31.8 99.00h6.2" stroke="#8b8b8b" stroke-width="0.45"/><path d="M37 104.66h1.1" stroke="#7c7c7c" stroke-width="0.45"/><path d="M37 110.32h1.1" stroke="#7c7c7c" stroke-width="0.45"/><path d="M37 115.98h1.1" stroke="#7c7c7c" stroke-width="0.45"/><path d="M37 121.64h1.1" stroke="#7c7c7c" stroke-width="0.45"/><path d="M31.8 127.30h6.2" stroke="#8b8b8b" stroke-width="0.45"/><path d="M37 132.96h1.1" stroke="#7c7c7c" stroke-width="0.45"/><path d="M37 138.62h1.1" stroke="#7c7c7c" stroke-width="0.45"/><path d="M37 144.28h1.1" stroke="#7c7c7c" stroke-width="0.45"/><path d="M37 149.94h1.1" stroke="#7c7c7c" stroke-width="0.45"/><path d="M31.8 155.60h6.2" stroke="#8b8b8b" stroke-width="0.45"/><path d="M37 161.26h1.1" stroke="#7c7c7c" stroke-width="0.45"/><path d="M37 166.92h1.1" stroke="#7c7c7c" stroke-width="0.45"/><path d="M37 172.58h1.1" stroke="#7c7c7c" stroke-width="0.45"/><path d="M37 178.24h1.1" stroke="#7c7c7c" stroke-width="0.45"/><path d="M31.8 183.90h6.2" stroke="#8b8b8b" stroke-width="0.45"/><path d="M37 189.56h1.1" stroke="#7c7c7c" stroke-width="0.45"/><path d="M37 195.22h1.1" stroke="#7c7c7c" stroke-width="0.45"/><path d="M37 200.88h1.1" stroke="#7c7c7c" stroke-width="0.45"/><path d="M37 206.54h1.1" stroke="#7c7c7c" stroke-width="0.45"/><path d="M31.8 212.20h6.2" stroke="#8b8b8b" stroke-width="0.45"/><path d="M37 217.86h1.1" stroke="#7c7c7c" stroke-width="0.45"/><path d="M37 223.52h1.1" stroke="#7c7c7c" stroke-width="0.45"/><path d="M37 229.18h1.1" stroke="#7c7c7c" stroke-width="0.45"/><path d="M37 234.84h1.1" stroke="#7c7c7c" stroke-width="0.45"/><path d="M31.8 240.50h6.2" stroke="#8b8b8b" stroke-width="0.45"/><path d="M37 246.16h1.1" stroke="#7c7c7c" stroke-width="0.45"/><path d="M37 251.82h1.1" stroke="#7c7c7c" stroke-width="0.45"/><path d="M37 257.48h1.1" stroke="#7c7c7c" stroke-width="0.45"/><path d="M37 263.14h1.1" stroke="#7c7c7c" stroke-width="0.45"/><path d="M31.8 268.80h6.2" stroke="#8b8b8b" stroke-width="0.45"/><path d="M37 274.46h1.1" stroke="#7c7c7c" stroke-width="0.45"/><path d="M37 280.12h1.1" stroke="#7c7c7c" stroke-width="0.45"/><path d="M37 285.78h1.1" stroke="#7c7c7c" stroke-width="0.45"/><path d="M37 291.44h1.1" stroke="#7c7c7c" stroke-width="0.45"/><path d="M31.8 297.10h6.2" stroke="#8b8b8b" stroke-width="0.45"/><path d="M37 302.76h1.1" stroke="#7c7c7c" stroke-width="0.45"/><path d="M37 308.42h1.1" stroke="#7c7c7c" stroke-width="0.45"/><path d="M37 314.08h1.1" stroke="#7c7c7c" stroke-width="0.45"/><path d="M37 319.74h1.1" stroke="#7c7c7c" stroke-width="0.45"/><path d="M31.8 325.40h6.2" stroke="#8b8b8b" stroke-width="0.45"/><path d="M37 331.06h1.1" stroke="#7c7c7c" stroke-width="0.45"/><path d="M37 336.72h1.1" stroke="#7c7c7c" stroke-width="0.45"/><path d="M37 342.38h1.1" stroke="#7c7c7c" stroke-width="0.45"/><path d="M37 348.04h1.1" stroke="#7c7c7c" stroke-width="0.45"/><path d="M31.8 353.70h6.2" stroke="#8b8b8b" stroke-width="0.45"/><path d="M37 359.36h1.1" stroke="#7c7c7c" stroke-width="0.45"/><path d="M37 365.02h1.1" stroke="#7c7c7c" stroke-width="0.45"/><path d="M37 370.68h1.1" stroke="#7c7c7c" stroke-width="0.45"/><path d="M37 376.34h1.1" stroke="#7c7c7c" stroke-width="0.45"/><path d="M31.8 382.00h6.2" stroke="#8b8b8b" stroke-width="0.45"/><path d="M37 387.66h1.1" stroke="#7c7c7c" stroke-width="0.45"/><path d="M37 393.32h1.1" stroke="#7c7c7c" stroke-width="0.45"/><path d="M37 398.98h1.1" stroke="#7c7c7c" stroke-width="0.45"/><path d="M37 404.64h1.1" stroke="#7c7c7c" stroke-width="0.45"/><path d="M31.8 410.30h6.2" stroke="#8b8b8b" stroke-width="0.45"/><path d="M37 415.96h1.1" stroke="#7c7c7c" stroke-width="0.45"/><path d="M37 421.62h1.1" stroke="#7c7c7c" stroke-width="0.45"/><path d="M37 427.28h1.1" stroke="#7c7c7c" stroke-width="0.45"/><path d="M37 432.94h1.1" stroke="#7c7c7c" stroke-width="0.45"/><path d="M31.8 438.60h6.2" stroke="#8b8b8b" stroke-width="0.45"/><path d="M37 444.26h1.1" stroke="#7c7c7c" stroke-width="0.45"/><path d="M37 449.92h1.1" stroke="#7c7c7c" stroke-width="0.45"/><path d="M37 455.58h1.1" stroke="#7c7c7c" stroke-width="0.45"/><path d="M37 461.24h1.1" stroke="#7c7c7c" stroke-width="0.45"/><path d="M31.8 466.90h6.2" stroke="#8b8b8b" stroke-width="0.45"/><path d="M37 472.56h1.1" stroke="#7c7c7c" stroke-width="0.45"/><path d="M37 478.22h1.1" stroke="#7c7c7c" stroke-width="0.45"/><path d="M37 483.88h1.1" stroke="#7c7c7c" stroke-width="0.45"/><path d="M37 489.54h1.1" stroke="#7c7c7c" stroke-width="0.45"/><path d="M31.8 495.20h6.2" stroke="#8b8b8b" stroke-width="0.45"/><path d="M37 500.86h1.1" stroke="#7c7c7c" stroke-width="0.45"/><path d="M37 506.52h1.1" stroke="#7c7c7c" stroke-width="0.45"/><path d="M37 512.18h1.1" stroke="#7c7c7c" stroke-width="0.45"/><path d="M37 517.84h1.1" stroke="#7c7c7c" stroke-width="0.45"/><path d="M31.8 523.50h6.2" stroke="#8b8b8b" stroke-width="0.45"/><path d="M37 529.16h1.1" stroke="#7c7c7c" stroke-width="0.45"/><path d="M37 534.82h1.1" stroke="#7c7c7c" stroke-width="0.45"/><path d="M37 540.48h1.1" stroke="#7c7c7c" stroke-width="0.45"/><path d="M37 546.14h1.1" stroke="#7c7c7c" stroke-width="0.45"/><path d="M31.8 551.80h6.2" stroke="#8b8b8b" stroke-width="0.45"/><path d="M37 557.46h1.1" stroke="#7c7c7c" stroke-width="0.45"/><path d="M37 563.12h1.1" stroke="#7c7c7c" stroke-width="0.45"/><path d="M37 568.78h1.1" stroke="#7c7c7c" stroke-width="0.45"/><path d="M37 574.44h1.1" stroke="#7c7c7c" stroke-width="0.45"/><path d="M31.8 580.10h6.2" stroke="#8b8b8b" stroke-width="0.45"/><path d="M37 585.76h1.1" stroke="#7c7c7c" stroke-width="0.45"/><path d="M32 175.5h5.8" stroke="#cfcfcf" stroke-width="0.6"/></svg><div class="t" style="left:33.20px;top:68.90px;font-size:5.80px;color:#b9bcc0;transform:scaleX(0.8);transform-origin:0 50%;-webkit-text-stroke:0;">5</div><div class="t" style="left:33.20px;top:97.20px;font-size:5.80px;color:#b9bcc0;transform:scaleX(0.8);transform-origin:0 50%;-webkit-text-stroke:0;">1</div><div class="t" style="left:33.20px;top:101.80px;font-size:5.80px;color:#b9bcc0;transform:scaleX(0.8);transform-origin:0 50%;-webkit-text-stroke:0;">0</div><div class="t" style="left:33.20px;top:125.50px;font-size:5.80px;color:#b9bcc0;transform:scaleX(0.8);transform-origin:0 50%;-webkit-text-stroke:0;">1</div><div class="t" style="left:33.20px;top:130.10px;font-size:5.80px;color:#b9bcc0;transform:scaleX(0.8);transform-origin:0 50%;-webkit-text-stroke:0;">5</div><div class="t" style="left:33.20px;top:153.80px;font-size:5.80px;color:#b9bcc0;transform:scaleX(0.8);transform-origin:0 50%;-webkit-text-stroke:0;">2</div><div class="t" style="left:33.20px;top:158.40px;font-size:5.80px;color:#b9bcc0;transform:scaleX(0.8);transform-origin:0 50%;-webkit-text-stroke:0;">0</div><div class="t" style="left:33.20px;top:182.10px;font-size:5.80px;color:#b9bcc0;transform:scaleX(0.8);transform-origin:0 50%;-webkit-text-stroke:0;">2</div><div class="t" style="left:33.20px;top:186.70px;font-size:5.80px;color:#b9bcc0;transform:scaleX(0.8);transform-origin:0 50%;-webkit-text-stroke:0;">5</div><div class="t" style="left:33.20px;top:210.40px;font-size:5.80px;color:#b9bcc0;transform:scaleX(0.8);transform-origin:0 50%;-webkit-text-stroke:0;">3</div><div class="t" style="left:33.20px;top:215.00px;font-size:5.80px;color:#b9bcc0;transform:scaleX(0.8);transform-origin:0 50%;-webkit-text-stroke:0;">0</div><div class="t" style="left:33.20px;top:238.70px;font-size:5.80px;color:#b9bcc0;transform:scaleX(0.8);transform-origin:0 50%;-webkit-text-stroke:0;">3</div><div class="t" style="left:33.20px;top:243.30px;font-size:5.80px;color:#b9bcc0;transform:scaleX(0.8);transform-origin:0 50%;-webkit-text-stroke:0;">5</div><div class="t" style="left:33.20px;top:267.00px;font-size:5.80px;color:#b9bcc0;transform:scaleX(0.8);transform-origin:0 50%;-webkit-text-stroke:0;">4</div><div class="t" style="left:33.20px;top:271.60px;font-size:5.80px;color:#b9bcc0;transform:scaleX(0.8);transform-origin:0 50%;-webkit-text-stroke:0;">0</div><div class="t" style="left:33.20px;top:295.30px;font-size:5.80px;color:#b9bcc0;transform:scaleX(0.8);transform-origin:0 50%;-webkit-text-stroke:0;">4</div><div class="t" style="left:33.20px;top:299.90px;font-size:5.80px;color:#b9bcc0;transform:scaleX(0.8);transform-origin:0 50%;-webkit-text-stroke:0;">5</div><div class="t" style="left:33.20px;top:323.60px;font-size:5.80px;color:#b9bcc0;transform:scaleX(0.8);transform-origin:0 50%;-webkit-text-stroke:0;">5</div><div class="t" style="left:33.20px;top:328.20px;font-size:5.80px;color:#b9bcc0;transform:scaleX(0.8);transform-origin:0 50%;-webkit-text-stroke:0;">0</div><div class="t" style="left:33.20px;top:351.90px;font-size:5.80px;color:#b9bcc0;transform:scaleX(0.8);transform-origin:0 50%;-webkit-text-stroke:0;">5</div><div class="t" style="left:33.20px;top:356.50px;font-size:5.80px;color:#b9bcc0;transform:scaleX(0.8);transform-origin:0 50%;-webkit-text-stroke:0;">5</div><div class="t" style="left:33.20px;top:380.20px;font-size:5.80px;color:#b9bcc0;transform:scaleX(0.8);transform-origin:0 50%;-webkit-text-stroke:0;">6</div><div class="t" style="left:33.20px;top:384.80px;font-size:5.80px;color:#b9bcc0;transform:scaleX(0.8);transform-origin:0 50%;-webkit-text-stroke:0;">0</div><div class="t" style="left:33.20px;top:408.50px;font-size:5.80px;color:#b9bcc0;transform:scaleX(0.8);transform-origin:0 50%;-webkit-text-stroke:0;">6</div><div class="t" style="left:33.20px;top:413.10px;font-size:5.80px;color:#b9bcc0;transform:scaleX(0.8);transform-origin:0 50%;-webkit-text-stroke:0;">5</div><div class="t" style="left:33.20px;top:436.80px;font-size:5.80px;color:#b9bcc0;transform:scaleX(0.8);transform-origin:0 50%;-webkit-text-stroke:0;">7</div><div class="t" style="left:33.20px;top:441.40px;font-size:5.80px;color:#b9bcc0;transform:scaleX(0.8);transform-origin:0 50%;-webkit-text-stroke:0;">0</div><div class="t" style="left:33.20px;top:465.10px;font-size:5.80px;color:#b9bcc0;transform:scaleX(0.8);transform-origin:0 50%;-webkit-text-stroke:0;">7</div><div class="t" style="left:33.20px;top:469.70px;font-size:5.80px;color:#b9bcc0;transform:scaleX(0.8);transform-origin:0 50%;-webkit-text-stroke:0;">5</div><div class="t" style="left:33.20px;top:493.40px;font-size:5.80px;color:#b9bcc0;transform:scaleX(0.8);transform-origin:0 50%;-webkit-text-stroke:0;">8</div><div class="t" style="left:33.20px;top:498.00px;font-size:5.80px;color:#b9bcc0;transform:scaleX(0.8);transform-origin:0 50%;-webkit-text-stroke:0;">0</div><div class="t" style="left:33.20px;top:521.70px;font-size:5.80px;color:#b9bcc0;transform:scaleX(0.8);transform-origin:0 50%;-webkit-text-stroke:0;">8</div><div class="t" style="left:33.20px;top:526.30px;font-size:5.80px;color:#b9bcc0;transform:scaleX(0.8);transform-origin:0 50%;-webkit-text-stroke:0;">5</div><div class="t" style="left:33.20px;top:550.00px;font-size:5.80px;color:#b9bcc0;transform:scaleX(0.8);transform-origin:0 50%;-webkit-text-stroke:0;">9</div><div class="t" style="left:33.20px;top:554.60px;font-size:5.80px;color:#b9bcc0;transform:scaleX(0.8);transform-origin:0 50%;-webkit-text-stroke:0;">0</div><div class="t" style="left:33.20px;top:578.30px;font-size:5.80px;color:#b9bcc0;transform:scaleX(0.8);transform-origin:0 50%;-webkit-text-stroke:0;">9</div><div class="t" style="left:33.20px;top:582.90px;font-size:5.80px;color:#b9bcc0;transform:scaleX(0.8);transform-origin:0 50%;-webkit-text-stroke:0;">5</div><div style="position:absolute;left:31.50px;top:591.30px;width:797.00px;height:6.80px;background:#535353;"></div><div style="position:absolute;left:129.00px;top:591.30px;width:692.00px;height:6.80px;background:#4a4a4a;"></div><div style="position:absolute;left:332.00px;top:592.30px;width:285.80px;height:5.00px;background:#6b6b6b;"></div><div style="position:absolute;left:31.50px;top:591.30px;width:19.60px;height:6.80px;background:#4b4b4b;"></div><div class="t" style="left:33.20px;top:590.60px;font-size:4.60px;color:#e0e0e0;">66.67%</div><div class="t" style="left:69.00px;top:590.60px;font-size:4.60px;color:#d0d0d0;letter-spacing:0.037px;">文档:17.1M/64.9M</div><svg style="position:absolute;left:124.40px;top:593.50px;" width="2.00" height="2.60" viewBox="0 0 2 2.6"><path d="M0.3 0.2l1.1 1.1-1.1 1.1" stroke="#a0a0a0" stroke-width="0.5" fill="none"/></svg><svg style="position:absolute;left:132.40px;top:593.50px;" width="2.00" height="2.60" viewBox="0 0 2 2.6"><path d="M1.4 0.2L0.3 1.3l1.1 1.1" stroke="#7a7a7a" stroke-width="0.5" fill="none"/></svg><svg style="position:absolute;left:816.80px;top:593.40px;" width="2.00" height="2.60" viewBox="0 0 2 2.6"><path d="M0.300 0.200l1.100 1.100-1.100 1.100" stroke="#707070" stroke-width="0.5" fill="none"/></svg><div style="position:absolute;left:821.00px;top:53.40px;width:7.60px;height:537.90px;background:#4a4a4a;"></div><div style="position:absolute;left:822.20px;top:226.70px;width:5.20px;height:184.00px;background:#6b6b6b;"></div><svg style="position:absolute;left:822.80px;top:587.50px;" width="3.00" height="1.00" viewBox="0 0 3 1"><path d="M0.3 0.5h1.7" stroke="#8a8a8a" stroke-width="0.5"/></svg><div style="position:absolute;left:828.40px;top:33.90px;width:1.00px;height:564.20px;background:#434343;"></div><div style="position:absolute;left:0.00px;top:598.00px;width:1080.00px;height:0.70px;background:#494949;"></div><div style="position:absolute;left:0.00px;top:38.90px;width:31.00px;height:559.20px;background:#535353;"></div><div style="position:absolute;left:0.00px;top:33.90px;width:0.90px;height:564.20px;background:#494949;"></div><div style="position:absolute;left:30.40px;top:33.90px;width:1.20px;height:564.20px;background:#444444;"></div><div style="position:absolute;left:10.80px;top:41.20px;width:8.30px;height:0.50px;background:#5f5f5f;"></div><div style="position:absolute;left:2.10px;top:47.10px;width:12.70px;height:9.70px;background:#383838;border-radius:0.8px"></div><svg style="position:absolute;left:4.70px;top:48.30px;" width="6.60" height="6.60" viewBox="0 0 8 8"><path d="M4 0L5.500 1.900H4.500V3.500H6.100V2.500L8 4L6.100 5.500V4.500H4.500V6.100H5.500L4 8L2.500 6.100H3.500V4.500H1.900V5.500L0 4L1.900 2.500V3.500H3.500V1.900H2.500Z" fill="#dadada"/></svg><svg style="position:absolute;left:11.70px;top:54.60px;" width="1.60" height="1.60" viewBox="0 0 1.6 1.6"><path d="M1.5 0v1.5H0z" fill="#bdbdbd"/></svg><svg style="position:absolute;left:18.20px;top:47.90px;" width="8.00" height="8.00" viewBox="0 0 8 8"><rect x="0.9" y="1.3" width="6.2" height="5.4" stroke="#dadada" fill="none" stroke-width="0.7" stroke-dasharray="1.3 0.9"/></svg><svg style="position:absolute;left:25.90px;top:54.90px;" width="1.60" height="1.60" viewBox="0 0 1.6 1.6"><path d="M1.5 0v1.5H0z" fill="#bdbdbd"/></svg><svg style="position:absolute;left:4.30px;top:58.82px;" width="8.00" height="8.00" viewBox="0 0 8 8"><ellipse cx="4" cy="3.4" rx="3.2" ry="2.3" stroke="#dadada" fill="none" stroke-width="0.75"/><path d="M2 5.2c-.8.6-.9 1.5-.1 2" stroke="#dadada" fill="none" stroke-width="0.6"/></svg><svg style="position:absolute;left:12.00px;top:65.82px;" width="1.60" height="1.60" viewBox="0 0 1.6 1.6"><path d="M1.5 0v1.5H0z" fill="#bdbdbd"/></svg><svg style="position:absolute;left:18.20px;top:58.82px;" width="8.00" height="8.00" viewBox="0 0 8 8"><path d="M0.9 7.1l4-4" stroke="#dadada" stroke-width="1.3"/><path d="M5.9 0.5v1.4M5.9 3.3v1.1M4 2.4h1.2M6.7 2.4h1.1M4.6 1.1l.6.6M7.2 1.1l-.6.6" stroke="#dadada" stroke-width="0.5"/></svg><svg style="position:absolute;left:25.90px;top:65.82px;" width="1.60" height="1.60" viewBox="0 0 1.6 1.6"><path d="M1.5 0v1.5H0z" fill="#bdbdbd"/></svg><svg style="position:absolute;left:4.30px;top:69.74px;" width="8.00" height="8.00" viewBox="0 0 8 8"><path d="M0.7 7.2l2.3-3.3 3.8-2.8-.9 2.5-3 2.3z" fill="#dadada"/><path d="M4.3 5.4l2.5-1.2" stroke="#dadada" stroke-width="0.6"/></svg><svg style="position:absolute;left:12.00px;top:76.74px;" width="1.60" height="1.60" viewBox="0 0 1.6 1.6"><path d="M1.5 0v1.5H0z" fill="#bdbdbd"/></svg><svg style="position:absolute;left:18.20px;top:69.74px;" width="8.00" height="8.00" viewBox="0 0 8 8"><rect x="0.9" y="1.1" width="6.2" height="5.8" stroke="#dadada" fill="none" stroke-width="0.75"/><path d="M0.9 1.1l6.2 5.8M7.1 1.1L0.9 6.9" stroke="#dadada" stroke-width="0.6"/></svg><svg style="position:absolute;left:25.90px;top:76.74px;" width="1.60" height="1.60" viewBox="0 0 1.6 1.6"><path d="M1.5 0v1.5H0z" fill="#bdbdbd"/></svg><svg style="position:absolute;left:4.30px;top:80.66px;" width="8.00" height="8.00" viewBox="0 0 8 8"><path d="M0.8 7.3l.5-1.6 3-3 1.1 1.1-3 3z" stroke="#dadada" fill="none" stroke-width="0.6"/><path d="M4.3 2l1.7 1.7 1.2-1.2c.6-.6.4-1.3-.1-1.7-.5-.5-1.100-.600-1.700 0z" fill="#dadada"/></svg><svg style="position:absolute;left:12.00px;top:87.66px;" width="1.60" height="1.60" viewBox="0 0 1.6 1.6"><path d="M1.5 0v1.5H0z" fill="#bdbdbd"/></svg><svg style="position:absolute;left:18.20px;top:80.66px;" width="8.00" height="8.00" viewBox="0 0 8 8"><rect x="0.9" y="1.5" width="6.2" height="5" rx="1.5" stroke="#dadada" fill="none" stroke-width="0.85"/></svg><svg style="position:absolute;left:25.90px;top:87.66px;" width="1.60" height="1.60" viewBox="0 0 1.6 1.6"><path d="M1.5 0v1.5H0z" fill="#bdbdbd"/></svg><svg style="position:absolute;left:4.30px;top:91.58px;" width="8.00" height="8.00" viewBox="0 0 8 8"><path d="M7.2 0.6L3 4.8l0.9 0.9z" fill="#dadada"/><path d="M2.7 5.2l0.8 0.8c-0.6 1.1-1.7 1.4-2.8 1.3c0.7-0.5 0.9-1.4 2-2.1z" fill="#dadada"/></svg><svg style="position:absolute;left:12.00px;top:98.58px;" width="1.60" height="1.60" viewBox="0 0 1.6 1.6"><path d="M1.5 0v1.5H0z" fill="#bdbdbd"/></svg><svg style="position:absolute;left:18.60px;top:91.58px;" width="8.00" height="8.00" viewBox="0 0 8 8"><circle cx="4.3" cy="1.8" r="1.25" fill="#dadada"/><rect x="3.7" y="2.6" width="1.2" height="1.7" fill="#dadada"/><rect x="1.4" y="4.1" width="5.8" height="1.5" rx="0.3" fill="#dadada"/><rect x="1.4" y="6.3" width="5.8" height="1" fill="#dadada"/><path d="M-0.6 0.2l1.5 1.5m0-1.5l-1.5 1.500" stroke="#dadada" stroke-width="0.45"/></svg><svg style="position:absolute;left:26.30px;top:98.58px;" width="1.60" height="1.60" viewBox="0 0 1.6 1.6"><path d="M1.5 0v1.5H0z" fill="#bdbdbd"/></svg><svg style="position:absolute;left:4.70px;top:102.50px;" width="8.00" height="8.00" viewBox="0 0 8 8"><path d="M7.2 1L3.400 4.9l0.9 0.900z" fill="#dadada"/><path d="M3.100 5.300l0.800 0.800c-0.600 1-1.600 1.300-2.600 1.200c0.600-0.500 0.800-1.300 1.800-2z" fill="#dadada"/><path d="M0.200 3a2.100 2.100 0 0 1 3.200-1.700" stroke="#dadada" fill="none" stroke-width="0.55"/><path d="M3.700 0.300l-0.100 1.300l-1.300-0.200z" fill="#dadada"/></svg><svg style="position:absolute;left:12.40px;top:109.50px;" width="1.60" height="1.60" viewBox="0 0 1.6 1.6"><path d="M1.5 0v1.5H0z" fill="#bdbdbd"/></svg><svg style="position:absolute;left:18.20px;top:102.50px;" width="8.00" height="8.00" viewBox="0 0 8 8"><path d="M4 0.900l3.200 2.300l-2.300 3l-3.200-2.300z" fill="#dadada"/><path d="M1.500 4.200l-0.700 0.900l2.200 1.700h4" stroke="#dadada" fill="none" stroke-width="0.6"/></svg><svg style="position:absolute;left:25.90px;top:109.50px;" width="1.60" height="1.60" viewBox="0 0 1.6 1.6"><path d="M1.5 0v1.5H0z" fill="#bdbdbd"/></svg><svg style="position:absolute;left:4.30px;top:113.42px;" width="8.00" height="8.00" viewBox="0 0 8 8"><path d="M3.100 1.300l3.300 2.800-2.600 3-3.200-2.700z" stroke="#dadada" fill="none" stroke-width="0.7"/><path d="M6.800 4.500c.700.900 1 1.600 1 2.100 0 .5-.4.800-.8.800s-.8-.3-.8-.8c0-.5.200-1.200.600-2.100z" fill="#dadada"/><path d="M2 2.800V0.700" stroke="#dadada" stroke-width="0.5"/></svg><svg style="position:absolute;left:12.00px;top:120.42px;" width="1.60" height="1.60" viewBox="0 0 1.6 1.6"><path d="M1.5 0v1.5H0z" fill="#bdbdbd"/></svg><svg style="position:absolute;left:18.20px;top:113.42px;" width="8.00" height="8.00" viewBox="0 0 8 8"><path d="M4 0.400C5.200 2.200 6.300 3.600 6.300 5A2.300 2.300 0 0 1 1.700 5C1.700 3.600 2.800 2.200 4 0.400Z" fill="#dadada"/></svg><svg style="position:absolute;left:25.90px;top:120.42px;" width="1.60" height="1.60" viewBox="0 0 1.6 1.6"><path d="M1.5 0v1.5H0z" fill="#bdbdbd"/></svg><svg style="position:absolute;left:4.30px;top:124.34px;" width="8.00" height="8.00" viewBox="0 0 8 8"><ellipse cx="3.600" cy="3.800" rx="3" ry="2.200" fill="#dadada"/><ellipse cx="2.900" cy="3.700" rx="1.100" ry="0.700" fill="#535353"/><path d="M5.300 5l2 1.700" stroke="#dadada" stroke-width="1.100"/></svg><svg style="position:absolute;left:12.00px;top:131.34px;" width="1.60" height="1.60" viewBox="0 0 1.6 1.6"><path d="M1.5 0v1.5H0z" fill="#bdbdbd"/></svg><svg style="position:absolute;left:18.20px;top:124.34px;" width="8.00" height="8.00" viewBox="0 0 8 8"><path d="M1 6.900l1.100-3.500 2.600-2.400 2.400 2.400-2.500 2.500z" stroke="#dadada" fill="none" stroke-width="0.7"/><path d="M2.200 5.700l2-2" stroke="#dadada" stroke-width="0.5"/><circle cx="4.500" cy="3.500" r="0.700" fill="#dadada"/></svg><svg style="position:absolute;left:25.90px;top:131.34px;" width="1.60" height="1.60" viewBox="0 0 1.6 1.6"><path d="M1.5 0v1.5H0z" fill="#bdbdbd"/></svg><div class="t" style="left:5.60px;top:134.36px;font-size:8.40px;color:#dadada;font-weight:bold;font-family:'Liberation Serif',serif;">T</div><svg style="position:absolute;left:12.00px;top:142.26px;" width="1.60" height="1.60" viewBox="0 0 1.6 1.6"><path d="M1.500 0v1.500H0z" fill="#bdbdbd"/></svg><svg style="position:absolute;left:18.20px;top:135.26px;" width="8.00" height="8.00" viewBox="0 0 8 8"><path d="M2.400 0.600v6l1.500-1.400 1 2.200.9-.4-1-2.200h2z" fill="#1e1e1e" stroke="#dadada" stroke-width="0.45"/></svg><svg style="position:absolute;left:25.90px;top:142.26px;" width="1.60" height="1.60" viewBox="0 0 1.6 1.6"><path d="M1.5 0v1.5H0z" fill="#bdbdbd"/></svg><svg style="position:absolute;left:4.30px;top:146.18px;" width="8.00" height="8.00" viewBox="0 0 8 8"><rect x="0.800" y="1.600" width="6.400" height="4.800" fill="#6a6a6a" stroke="#dadada" stroke-width="0.6"/></svg><svg style="position:absolute;left:12.00px;top:153.18px;" width="1.60" height="1.60" viewBox="0 0 1.6 1.6"><path d="M1.5 0v1.5H0z" fill="#bdbdbd"/></svg><svg style="position:absolute;left:18.20px;top:146.18px;" width="8.00" height="8.00" viewBox="0 0 8 8"><path d="M2.200 7.300c-.8-1-1.600-2-1.900-2.700-.2-.5.400-.8.800-.4l.8.900V1.700c0-.6.900-.6.900 0V1c0-.6.900-.6.900 0v.4c0-.6.900-.6.900 0v.7c0-.5.900-.5.900 0v3c0 1-.4 1.700-.8 2.200z" fill="#dadada"/></svg><svg style="position:absolute;left:25.90px;top:153.18px;" width="1.60" height="1.60" viewBox="0 0 1.6 1.6"><path d="M1.5 0v1.5H0z" fill="#bdbdbd"/></svg><svg style="position:absolute;left:4.30px;top:157.10px;" width="8.00" height="8.00" viewBox="0 0 8 8"><circle cx="3.100" cy="3.100" r="2.400" stroke="#dadada" fill="none" stroke-width="0.75"/><path d="M4.900 4.900l2.400 2.400" stroke="#dadada" stroke-width="1"/></svg><svg style="position:absolute;left:18.20px;top:157.10px;" width="8.00" height="8.00" viewBox="0 0 8 8"><circle cx="1.800" cy="4" r="0.700" fill="#dadada"/><circle cx="4" cy="4" r="0.700" fill="#dadada"/><circle cx="6.200" cy="4" r="0.700" fill="#dadada"/></svg><svg style="position:absolute;left:25.90px;top:164.10px;" width="1.60" height="1.60" viewBox="0 0 1.6 1.6"><path d="M1.5 0v1.5H0z" fill="#bdbdbd"/></svg><div style="position:absolute;left:14.30px;top:177.20px;width:9.70px;height:9.90px;background:#0f7fd6;border:0.5px solid #bcd7ee;box-sizing:border-box"></div><div style="position:absolute;left:8.10px;top:170.30px;width:9.90px;height:10.40px;background:#000;border:0.7px solid #cfcfcf;box-sizing:border-box"></div><svg style="position:absolute;left:21.00px;top:170.40px;" width="4.60" height="4.20" viewBox="0 0 4.6 4.2"><path d="M0.400 0.800h2.600v2.600" stroke="#cfcfcf" stroke-width="0.55" fill="none"/><path d="M0 0.800l1-.8v1.600zM3 4.200l-.8-1h1.600z" fill="#cfcfcf"/></svg><div style="position:absolute;left:8.90px;top:185.80px;width:2.80px;height:2.80px;background:#e6e6e6;"></div><div style="position:absolute;left:7.40px;top:184.40px;width:2.80px;height:2.80px;background:#111;border:0.4px solid #cfcfcf;box-sizing:border-box"></div><svg style="position:absolute;left:4.20px;top:193.00px;" width="8.00" height="5.60" viewBox="0 0 8 5.6"><rect x="0.300" y="0.300" width="7.300" height="4.900" fill="none" stroke="#c8c8c8" stroke-width="0.6"/><ellipse cx="3.950" cy="2.750" rx="1.700" ry="1.500" fill="none" stroke="#9a9a9a" stroke-width="0.5" stroke-dasharray="0.8 0.5"/></svg><svg style="position:absolute;left:18.20px;top:192.70px;" width="8.20" height="6.00" viewBox="0 0 8.2 6"><rect x="1.700" y="0.300" width="6" height="3.800" rx="0.4" fill="none" stroke="#c8c8c8" stroke-width="0.6"/><rect x="0.300" y="1.700" width="6" height="3.800" rx="0.4" fill="#535353" stroke="#c8c8c8" stroke-width="0.6"/></svg><svg style="position:absolute;left:26.10px;top:198.00px;" width="1.60" height="1.60" viewBox="0 0 1.6 1.6"><path d="M1.500 0v1.500H0z" fill="#bdbdbd"/></svg><div style="position:absolute;left:38.20px;top:53.40px;width:782.80px;height:537.90px;background:#282828;"></div><div style="position:absolute;left:243.30px;top:53.40px;width:372.70px;height:537.90px;background:#b5b5b5;"></div><svg role="img" aria-label="poster mockup with 35 logo" style="position:absolute;left:0;top:0" width="1080" height="607" viewBox="0 0 1080 607"><defs>
<linearGradient id="shL" x1="0" x2="1"><stop offset="0" stop-color="#b5b5b5"/><stop offset="0.5" stop-color="#aaaaaa"/><stop offset="0.88" stop-color="#8c8c8c"/><stop offset="1" stop-color="#888888"/></linearGradient>
<linearGradient id="shR" x1="0" x2="1"><stop offset="0" stop-color="#7a7a7a"/><stop offset="0.08" stop-color="#7d7d7d"/><stop offset="0.4" stop-color="#9c9c9c"/><stop offset="1" stop-color="#b5b5b5"/></linearGradient>
<linearGradient id="poster" x1="0.12" y1="0" x2="0" y2="1"><stop offset="0" stop-color="#fbfbfc"/><stop offset="0.45" stop-color="#f6f6f9"/><stop offset="0.75" stop-color="#ededf1"/><stop offset="1" stop-color="#dbdbe0"/></linearGradient>
<linearGradient id="skinL" gradientUnits="userSpaceOnUse" x1="262" x2="303"><stop offset="0" stop-color="#d3bfb2"/><stop offset="0.22" stop-color="#ebdacf"/><stop offset="0.5" stop-color="#eddcd1"/><stop offset="0.68" stop-color="#e7cfc3"/><stop offset="1" stop-color="#e9d2c6"/></linearGradient>
<linearGradient id="skinR" gradientUnits="userSpaceOnUse" x1="561" x2="603"><stop offset="0" stop-color="#e9d3c7"/><stop offset="0.32" stop-color="#e7d0c4"/><stop offset="0.5" stop-color="#eddcd1"/><stop offset="0.78" stop-color="#ead9ce"/><stop offset="1" stop-color="#cfbaad"/></linearGradient>
<linearGradient id="jeans" x1="0" x2="1"><stop offset="0" stop-color="#111112"/><stop offset="0.25" stop-color="#202022"/><stop offset="0.5" stop-color="#19191b"/><stop offset="0.75" stop-color="#1f1f21"/><stop offset="1" stop-color="#101011"/></linearGradient><pattern id="weave" width="2.6" height="2.2" patternUnits="userSpaceOnUse"><path d="M0 0.500h2.600M0.700 0v2.200" stroke="#6a6a72" stroke-width="0.35" opacity="0.16"/></pattern>
<radialGradient id="pink" cx="0.5" cy="0.5" r="0.5"><stop offset="0" stop-color="#dd9a93" stop-opacity="0.75"/><stop offset="1" stop-color="#dd9a93" stop-opacity="0"/></radialGradient>
<radialGradient id="posterL" gradientUnits="userSpaceOnUse" cx="289" cy="523" r="260"><stop offset="0" stop-color="#000" stop-opacity="0.075"/><stop offset="0.5" stop-color="#000" stop-opacity="0.03"/><stop offset="1" stop-color="#000" stop-opacity="0"/></radialGradient>
<filter id="b2" x="-30%" y="-30%" width="160%" height="160%"><feGaussianBlur stdDeviation="2.2"/></filter>
<filter id="b1" x="-20%" y="-20%" width="140%" height="140%"><feGaussianBlur stdDeviation="0.5"/></filter>
</defs><rect x="292" y="522" width="60" height="69.3" fill="url(#shL)"/><rect x="490" y="522" width="80" height="69.3" fill="url(#shR)"/><path d="M407 591.3L425.400 524L435.600 591.300z" fill="#585858"/><clipPath id="legclip"><path d="M350.200 521L425.300 521L425.300 527L407.800 591.300L343.200 591.300Z"/><path d="M425.300 521L497.500 521L493.800 591.300L435.400 591.300L425.600 527Z"/></clipPath><path d="M350.200 521L425.300 521L425.300 527L407.800 591.300L343.200 591.300Z" fill="url(#jeans)"/><path d="M425.300 521L497.500 521L493.800 591.300L435.400 591.300L425.600 527Z" fill="url(#jeans)"/><path d="M350.200 521L497.500 521L493.800 591.300L343.200 591.300Z" fill="url(#weave)" clip-path="url(#legclip)"/><path d="M428.500 528L438.500 591" stroke="#4a3f2c" stroke-width="0.5" fill="none" opacity="0.8"/><rect x="289.30" y="115.20" width="285.20" height="407.40" fill="url(#poster)"/><rect x="289.30" y="115.20" width="285.20" height="407.40" fill="url(#posterL)"/><clipPath id="hc"><rect x="240" y="100" width="49.300" height="125"/><rect x="289.300" y="100" width="20" height="57.500"/></clipPath><g id="hand" clip-path="url(#hc)"><path d="M279.500 123.200C281.500 123.600 283 124.300 284.600 125L290 127.300L297 129L301.500 130.200C302.800 130.800 303 131.800 302.600 132.600C302.400 133.800 301.800 134.400 301 134.800L296 135.800L291.800 135.800C292.600 137 292.700 138 292.500 139L292.300 144C292.100 146 291.600 147.500 291 148.500L288.900 152L288.500 156C288.800 158.500 289.100 160 289.300 162L289.800 168L289.500 172C289 174.500 288.200 175.800 287.500 177L286.200 181L285.600 190L285 200L284.600 211L265.500 211L267.500 195L269.300 185C269.700 182 269.900 180 269.800 177.600L268.600 168L266.500 157.800L264 150C263 147 262.500 144 262.400 141.400C262.400 139 262.800 137 263.500 135C264.500 132.800 266 131 267.500 129.500C269.300 127.800 271 126.500 273 125.500C275.300 124.300 277.500 123.200 279.500 123.200Z" fill="url(#skinL)"/><ellipse cx="277" cy="150" rx="9" ry="16" fill="#f4e8df" opacity="0.4" filter="url(#b2)"/><ellipse cx="286.500" cy="168.500" rx="4.800" ry="9.500" fill="url(#pink)"/><ellipse cx="283" cy="160" rx="3.500" ry="5" fill="url(#pink)" opacity="0.45"/><g fill="none" stroke="#b39080" stroke-linecap="round" filter="url(#b1)"><path d="M267.500 139.200C272 136.800 278 135 284 135.300L291.500 136.200" stroke-width="0.9" opacity="0.75"/><path d="M265.500 150C270 147 277 145.800 283 146.500L289 148.300" stroke-width="0.9" opacity="0.7"/><path d="M269 158.500C273 156 278 154.800 283 155L288 155.500" stroke-width="0.8" opacity="0.55"/><path d="M285.500 147.500C287.500 149 288.500 151 288.600 154" stroke="#9d7564" stroke-width="1.300" opacity="0.8"/><path d="M263.300 138C262.800 142 263.500 147 265.500 152.500C267.500 158 268.800 165 269.400 172C269.800 178 269 186 267.300 196L265.900 210" stroke="#c6ae9f" stroke-width="1.600" opacity="0.8"/></g><path d="M291.800 135.900C295 136.700 298.500 136.300 301 135" stroke="#b99a8b" stroke-width="0.700" fill="none" opacity="0.7" filter="url(#b1)"/></g><clipPath id="hcR"><rect x="574.500" y="100" width="50" height="125"/><rect x="552" y="100" width="22.500" height="58.500"/></clipPath><g clip-path="url(#hcR)"><path d="M561.200 134C560.800 132.500 561.600 131.300 563 130.700L568 129.900L575 129.500L581.800 128.200C584 128.300 586 128.800 588 129.500L595.800 133.100C597.600 134.200 599 135.500 600 137C601.200 138.500 601.900 140 602.100 141.400C602.200 143.500 602 145.200 601.500 147L599.100 156.200L597.500 165L596.700 172.700L596.200 184.200L596.800 195L597.500 214L579.400 214L579.600 195L579.400 180.900L578 176L576.400 171L575.500 168L575.200 163L576 157.800L574 153L572.400 148L571.800 143L572 137.700L568 138C565.500 137.800 563.500 137.300 562.300 136.500C561.600 135.800 561.300 135 561.200 134Z" fill="url(#skinR)"/><ellipse cx="587" cy="152" rx="8" ry="15" fill="#f4e8df" opacity="0.35" filter="url(#b2)"/><ellipse cx="578.500" cy="170" rx="4.200" ry="9" fill="url(#pink)" opacity="0.55"/><g fill="none" stroke="#b39080" stroke-linecap="round" filter="url(#b1)"><path d="M598.500 142C594 139.500 588 137.600 581 137.500L572.500 138.200" stroke-width="0.9" opacity="0.75"/><path d="M599 152.500C594 149.500 588 148.300 582 148.600L575.500 150" stroke-width="0.9" opacity="0.7"/><path d="M596.500 160.500C592 158 587 157 582 157.200L577.500 157.800" stroke-width="0.8" opacity="0.55"/><path d="M578 149.500C576.500 151 575.700 153.500 575.800 156.500" stroke="#9d7564" stroke-width="1.200" opacity="0.75"/><path d="M601.400 140C601.800 144 601 149 599 155C597.300 161 596.500 168 596.200 175C596 182 596.300 190 596.900 198L597.300 213" stroke="#c6ae9f" stroke-width="1.600" opacity="0.8"/></g><path d="M562.500 136.800C565 137.900 568.500 138.300 572 137.800" stroke="#b99a8b" stroke-width="0.700" fill="none" opacity="0.7" filter="url(#b1)"/></g><path d="M256.800 205.800L286 207.200L289.300 213L289.300 305.600L276.500 303.500L262.700 299.500Q254.800 295 254.600 287L253.300 279.800L255.200 244.300L257.800 214.700Z" fill="#070707"/><path d="M577.800 209.800L598.500 213.700L602.400 209.800L603.800 214.700L602.400 222.600L603 254.200L602.400 289.700Q601.500 297 596 300.500L589.600 303.500L574.500 306L574.500 215Z" fill="#070707"/><path d="M257.500 207.500L285.800 209" stroke="#2a2a2a" stroke-width="0.6" fill="none" opacity="0.6"/><g fill="#111111" stroke="none"><rect x="332.200" y="288.300" width="80.200" height="18.600"/><rect x="329" y="385.350" width="58" height="18.550"/><rect x="441.100" y="288.300" width="82.300" height="18.600"/><rect x="441.100" y="333.580" width="57.200" height="18.570"/><rect x="441.100" y="385.370" width="57.200" height="18.550"/></g><clipPath id="c3"><rect x="320" y="305.500" width="92.400" height="60"/></clipPath><line x1="413.400" y1="294.040" x2="350.100" y2="347.750" stroke="#111111" stroke-width="18.500" clip-path="url(#c3)"/><circle cx="386" cy="370" r="24.600" fill="none" stroke="#111111" stroke-width="18.600" stroke-dasharray="77.300 200" transform="rotate(-90 386 370)" shape-rendering="geometricPrecision"/><circle cx="497.300" cy="368.750" r="25.900" fill="none" stroke="#111111" stroke-width="18.550" stroke-dasharray="81.400 200" transform="rotate(-90 497.300 368.750)"/><rect x="321.100" y="173.100" width="221.400" height="231" fill="none" stroke="#ee78ee" stroke-width="0.62"/></svg><div class="t" style="left:319.55px;top:169.66px;font-size:19.80px;color:#121212;letter-spacing:0.265px;line-height:23.76px;height:23.76px;-webkit-text-stroke:0.5px #121212;">HOW TO USE MOCKUP</div><div class="t" style="left:388.10px;top:198.88px;font-size:10.80px;color:#2a2a2a;letter-spacing:0.115px;line-height:12.96px;height:12.96px;-webkit-text-stroke:0.1px #2a2a2a;">Your Design  here</div><div style="position:absolute;left:829.40px;top:38.90px;width:16.00px;height:559.20px;background:#535353;"></div><div style="position:absolute;left:845.40px;top:33.90px;width:1.00px;height:564.20px;background:#434343;"></div><div style="position:absolute;left:1062.40px;top:33.90px;width:1.30px;height:564.20px;background:#434343;"></div><div style="position:absolute;left:1063.70px;top:38.90px;width:16.30px;height:559.20px;background:#535353;"></div><div style="position:absolute;left:829.40px;top:56.20px;width:16.00px;height:0.70px;background:#444444;"></div><div style="position:absolute;left:829.40px;top:85.20px;width:16.00px;height:0.70px;background:#444444;"></div><div style="position:absolute;left:829.40px;top:114.30px;width:16.00px;height:0.70px;background:#444444;"></div><div style="position:absolute;left:829.40px;top:143.60px;width:16.00px;height:0.70px;background:#444444;"></div><div style="position:absolute;left:829.40px;top:161.00px;width:16.00px;height:0.70px;background:#444444;"></div><div style="position:absolute;left:834.30px;top:41.60px;width:6.20px;height:0.50px;background:#5f5f5f;"></div><div style="position:absolute;left:834.30px;top:58.60px;width:6.20px;height:0.50px;background:#5f5f5f;"></div><div style="position:absolute;left:834.30px;top:87.60px;width:6.20px;height:0.50px;background:#5f5f5f;"></div><div style="position:absolute;left:834.30px;top:116.60px;width:6.20px;height:0.50px;background:#5f5f5f;"></div><div style="position:absolute;left:834.30px;top:146.00px;width:6.20px;height:0.50px;background:#5f5f5f;"></div><svg style="position:absolute;left:833.40px;top:45.20px;" width="8.00" height="8.00" viewBox="0 0 8 8"><rect x="1.100" y="0.800" width="2" height="6.400" rx="0.3" fill="#dcdcdc"/><path d="M1.100 2.900h2M1.100 5.100h2" stroke="#535353" stroke-width="0.45"/><path d="M4.600 1.600a2.500 2.500 0 0 1 0 4.800" fill="none" stroke="#dcdcdc" stroke-width="0.8"/><path d="M4 5.500l1.100 1.200-1.500.2z" fill="#dcdcdc"/></svg><svg style="position:absolute;left:833.40px;top:61.90px;" width="8.00" height="8.00" viewBox="0 0 8 8"><circle cx="4" cy="4" r="1.500" fill="none" stroke="#dcdcdc" stroke-width="0.7"/><path d="M4 0.500v7M0.500 4h7M1.500 1.500l5 5M6.500 1.500l-5 5" stroke="#dcdcdc" stroke-width="0.55"/></svg><svg style="position:absolute;left:833.40px;top:73.80px;" width="8.00" height="8.00" viewBox="0 0 8 8"><path d="M0.500 6.800V4.200l.8-1 .7 1.200.8-2 .8 1.600.8-2.200.8 2 .8-1.400.7 1.200.8-.6v3.800z" fill="#dcdcdc"/></svg><svg style="position:absolute;left:833.40px;top:91.20px;" width="8.00" height="8.00" viewBox="0 0 8 8"><path d="M7.300 1.200L3.800 4.800l.8.800z" fill="#dcdcdc"/><path d="M3.500 5.200l.7.700c-.5 1-1.500 1.300-2.400 1.200.5-.5.700-1.300 1.700-1.900z" fill="#dcdcdc"/><path d="M0.600 1h2.200M0.600 2.200h2.200M0.600 3.400h1.400" stroke="#a8a8a8" stroke-width="0.45"/></svg><svg style="position:absolute;left:833.40px;top:103.20px;" width="8.00" height="8.00" viewBox="0 0 8 8"><path d="M0.600 2.500h6.800M0.600 5.500h6.800" stroke="#dcdcdc" stroke-width="0.6"/><rect x="1.500" y="1.500" width="1.600" height="2" fill="#dcdcdc"/><rect x="5" y="4.500" width="1.600" height="2" fill="#dcdcdc"/></svg><div class="t" style="left:833.60px;top:118.80px;font-size:7.20px;color:#dcdcdc;">A</div><div style="position:absolute;left:839.40px;top:120.60px;width:0.60px;height:7.20px;background:#dcdcdc;"></div><div class="t" style="left:834.60px;top:130.50px;font-size:7.40px;color:#dcdcdc;font-weight:bold;">¶</div><svg style="position:absolute;left:833.40px;top:149.40px;" width="8.00" height="8.00" viewBox="0 0 8 8"><path d="M4 0.700l3 1.600v3.400L4 7.300 1 5.700V2.300z" fill="none" stroke="#dcdcdc" stroke-width="0.65"/><path d="M1 2.300l3 1.600 3-1.600M4 3.900v3.400" fill="none" stroke="#dcdcdc" stroke-width="0.55"/></svg><div style="position:absolute;left:1063.70px;top:56.20px;width:16.30px;height:0.80px;background:#444444;"></div><div style="position:absolute;left:1063.70px;top:73.40px;width:16.30px;height:0.80px;background:#444444;"></div><div style="position:absolute;left:1068.30px;top:41.40px;width:6.20px;height:0.50px;background:#5f5f5f;"></div><div style="position:absolute;left:1068.30px;top:58.60px;width:6.20px;height:0.50px;background:#5f5f5f;"></div><svg style="position:absolute;left:1067.40px;top:43.60px;" width="8.00" height="10.00" viewBox="0 0 8 10"><path d="M4 0.700a2.700 2.700 0 0 1 1.500 4.950v1.100h-3v-1.100A2.700 2.700 0 0 1 4 0.700z" fill="none" stroke="#dcdcdc" stroke-width="0.7"/><path d="M2.900 7.700h2.200l-1.100 1.300z" fill="#dcdcdc"/></svg><svg style="position:absolute;left:1067.60px;top:61.60px;" width="8.00" height="8.00" viewBox="0 0 8 8"><rect x="0.600" y="0.900" width="6.300" height="6" rx="0.5" fill="none" stroke="#c4c4c4" stroke-width="0.7"/><rect x="3.700" y="0.900" width="2.200" height="2.900" fill="#c4c4c4"/></svg><div style="position:absolute;left:846.40px;top:38.90px;width:216.00px;height:60.60px;background:#535353;"></div><div style="position:absolute;left:846.40px;top:39.30px;width:216.00px;height:11.40px;background:#424242;"></div><div style="position:absolute;left:846.40px;top:39.30px;width:16.20px;height:11.60px;background:#535353;"></div><div class="t" style="left:850.00px;top:39.10px;font-size:5.00px;color:#f0f0f0;font-weight:bold;letter-spacing:-0.008px;">颜色</div><div class="t" style="left:866.20px;top:39.10px;font-size:5.00px;color:#8f8f8f;letter-spacing:-0.008px;">色板</div><div style="position:absolute;left:879.00px;top:39.80px;width:0.50px;height:10.90px;background:#4b4b4b;"></div><svg style="position:absolute;left:1056.30px;top:43.60px;" width="3.80" height="3.00" viewBox="0 0 3.8 3"><path d="M0 0.400h3.800M0 1.300h3.800M0 2.200h3.800M0 3h3.800" stroke="#b9b9b9" stroke-width="0.55"/></svg><div style="position:absolute;left:855.00px;top:60.00px;width:7.40px;height:7.80px;background:#1680d3;border:0.5px solid #b7d3ea;box-sizing:border-box"></div><div style="position:absolute;left:850.30px;top:56.20px;width:7.50px;height:7.40px;background:#000;border:0.6px solid #d0d0d0;box-sizing:border-box"></div><div style="position:absolute;left:864.900px;top:53.800px;width:175.600px;height:36.600px;background:linear-gradient(to bottom,rgba(0,0,0,0) 0%,rgba(0,0,0,0.52) 50%,#000 99%),linear-gradient(to right,#fff 0%,#0000ff 100%)"></div><svg style="position:absolute;left:935.50px;top:88.60px;" width="3.60" height="1.80" viewBox="0 0 3.6 1.8"><path d="M0.400 1.800A1.400 1.400 0 0 1 3.200 1.800" fill="none" stroke="#e0e0e0" stroke-width="0.55"/></svg><div style="position:absolute;left:1047.500px;top:54.100px;width:8.400px;height:36.400px;background:linear-gradient(to bottom,#ff0000 0%,#ff00ff 16.600%,#0000ff 33.300%,#00ffff 50%,#00ff00 66.600%,#ffff00 83.300%,#ff0000 100%)"></div><svg style="position:absolute;left:1044.00px;top:64.40px;" width="2.60" height="2.80" viewBox="0 0 2.6 2.8"><path d="M0 0l2.400 1.400L0 2.800z" fill="#e6e6e6"/></svg><div style="position:absolute;left:846.40px;top:99.20px;width:216.00px;height:0.80px;background:#434343;"></div><div style="position:absolute;left:846.40px;top:100.00px;width:216.00px;height:11.40px;background:#424242;"></div><div style="position:absolute;left:846.40px;top:100.00px;width:16.20px;height:11.60px;background:#535353;"></div><div class="t" style="left:850.00px;top:99.80px;font-size:5.00px;color:#f0f0f0;font-weight:bold;letter-spacing:-0.008px;">属性</div><div class="t" style="left:866.20px;top:99.80px;font-size:5.00px;color:#8f8f8f;letter-spacing:-0.008px;">调整</div><div style="position:absolute;left:879.00px;top:100.50px;width:0.50px;height:10.90px;background:#4b4b4b;"></div><svg style="position:absolute;left:1056.30px;top:104.30px;" width="3.80" height="3.00" viewBox="0 0 3.8 3"><path d="M0 0.400h3.800M0 1.300h3.800M0 2.200h3.800M0 3h3.800" stroke="#b9b9b9" stroke-width="0.55"/></svg><div style="position:absolute;left:846.40px;top:111.40px;width:216.00px;height:169.20px;background:#535353;"></div><div style="position:absolute;left:846.40px;top:126.30px;width:216.00px;height:0.70px;background:#454545;"></div><div style="position:absolute;left:1055.70px;top:127.00px;width:6.20px;height:143.00px;background:#4d4d4d;"></div><div style="position:absolute;left:851.00px;top:115.00px;width:8.80px;height:8.50px;background:#3a3a3a;border-radius:0.5px"></div><svg style="position:absolute;left:852.60px;top:116.20px;" width="6.00" height="6.00" viewBox="0 0 6 6"><path d="M1.300 0.500h2.300l1.200 1.200v3.800H1.300z" fill="#e4e4e4"/><path d="M0.600 3.300h2.200v2.200H0.600z" fill="#e4e4e4" stroke="#3a3a3a" stroke-width="0.4"/></svg><div style="position:absolute;left:861.90px;top:116.90px;width:7.10px;height:5.20px;background:#ececec;"></div><div style="position:absolute;left:863.60px;top:117.90px;width:3.60px;height:3.20px;background:#2c2c2c;border-radius:1.6px/1.5px"></div><div class="t" style="left:872.80px;top:114.30px;font-size:5.00px;color:#c2c2c2;letter-spacing:0.012px;">嵌入的智能对象</div><div class="t" style="left:850.00px;top:126.90px;font-size:5.00px;color:#c9c9c9;">W:</div><div class="t" style="left:859.60px;top:126.90px;font-size:5.00px;color:#c9c9c9;letter-spacing:-0.108px;">1180 像素</div><div class="t" style="left:897.90px;top:126.90px;font-size:5.00px;color:#c9c9c9;">H:</div><div class="t" style="left:907.50px;top:126.90px;font-size:5.00px;color:#c9c9c9;letter-spacing:-0.159px;">1235 像素</div><div class="t" style="left:850.60px;top:137.00px;font-size:5.00px;color:#c9c9c9;">X:</div><div style="position:absolute;left:857.90px;top:138.80px;width:25.00px;height:7.10px;background:#454545;"></div><div class="t" style="left:859.00px;top:137.00px;font-size:5.00px;color:#f0f0f0;letter-spacing:-0.189px;">416 像素</div><div class="t" style="left:898.80px;top:137.00px;font-size:5.00px;color:#c9c9c9;">Y:</div><div style="position:absolute;left:906.60px;top:138.80px;width:24.90px;height:7.10px;background:#454545;"></div><div class="t" style="left:907.70px;top:137.00px;font-size:5.00px;color:#f0f0f0;letter-spacing:-0.189px;">707 像素</div><div class="t" style="left:850.00px;top:152.10px;font-size:5.00px;color:#dedede;letter-spacing:-0.221px;">Layer 11.psb</div><div style="position:absolute;left:850.30px;top:164.40px;width:201.70px;height:6.90px;background:#4b4b4b;"></div><div class="t" style="left:853.50px;top:162.00px;font-size:5.00px;color:#757575;letter-spacing:0.012px;">不应用图层复合</div><svg style="position:absolute;left:1048.30px;top:167.30px;" width="2.60" height="1.80" viewBox="0 0 2.6 1.8"><path d="M0.200 0.200l1 1 1-1" stroke="#6e6e6e" stroke-width="0.45" fill="none"/></svg><div style="position:absolute;left:877.90px;top:180.00px;width:50.00px;height:8.40px;background:#454545;border-radius:0.5px"></div><div class="t" style="left:902.90px;top:178.90px;font-size:5.00px;color:#ececec;font-weight:bold;transform:translateX(-50%);">编辑内容</div><div style="position:absolute;left:877.90px;top:192.30px;width:50.00px;height:8.10px;background:#454545;border-radius:0.5px"></div><div class="t" style="left:902.90px;top:191.05px;font-size:5.00px;color:#ececec;font-weight:bold;letter-spacing:0.143px;transform:translateX(-50%);">转换为链接对象...</div><div style="position:absolute;left:877.90px;top:204.10px;width:50.00px;height:8.00px;background:#454545;border-radius:0.5px"></div><div class="t" style="left:902.90px;top:202.80px;font-size:5.00px;color:#ececec;font-weight:bold;transform:translateX(-50%);">转换为图层</div><div style="position:absolute;left:846.40px;top:280.40px;width:216.00px;height:0.90px;background:#434343;"></div><div style="position:absolute;left:846.40px;top:281.30px;width:216.00px;height:12.10px;background:#424242;"></div><div style="position:absolute;left:846.40px;top:281.30px;width:16.20px;height:12.30px;background:#535353;"></div><div class="t" style="left:850.00px;top:281.45px;font-size:5.00px;color:#f0f0f0;font-weight:bold;letter-spacing:-0.008px;">图层</div><div class="t" style="left:866.20px;top:281.45px;font-size:5.00px;color:#8f8f8f;letter-spacing:-0.008px;">通道</div><div style="position:absolute;left:879.00px;top:281.80px;width:0.50px;height:11.60px;background:#4b4b4b;"></div><div class="t" style="left:882.70px;top:281.45px;font-size:5.00px;color:#8f8f8f;letter-spacing:-0.008px;">路径</div><div style="position:absolute;left:895.40px;top:281.80px;width:0.50px;height:11.60px;background:#4b4b4b;"></div><svg style="position:absolute;left:1056.30px;top:285.95px;" width="3.80" height="3.00" viewBox="0 0 3.8 3"><path d="M0 0.400h3.800M0 1.300h3.800M0 2.200h3.800M0 3h3.800" stroke="#b9b9b9" stroke-width="0.55"/></svg><div style="position:absolute;left:846.40px;top:293.40px;width:216.00px;height:39.00px;background:#535353;"></div><div style="position:absolute;left:846.40px;top:307.30px;width:216.00px;height:0.60px;background:#474747;"></div><div style="position:absolute;left:846.40px;top:319.40px;width:216.00px;height:0.60px;background:#474747;"></div><div style="position:absolute;left:846.40px;top:332.00px;width:216.00px;height:0.60px;background:#474747;"></div><div style="position:absolute;left:848.10px;top:297.90px;width:34.80px;height:7.50px;background:#454545;border-radius:0.5px"></div><svg style="position:absolute;left:849.90px;top:299.20px;" width="5.60" height="5.60" viewBox="0 0 5.6 5.6"><circle cx="2.100" cy="2.100" r="1.600" fill="none" stroke="#dcdcdc" stroke-width="0.7"/><path d="M3.300 3.300l1.900 1.900" stroke="#dcdcdc" stroke-width="0.9"/></svg><div class="t" style="left:856.20px;top:296.30px;font-size:5.00px;color:#e0e0e0;font-weight:bold;letter-spacing:0.092px;">类型</div><svg style="position:absolute;left:878.90px;top:301.00px;" width="2.60" height="1.80" viewBox="0 0 2.6 1.8"><path d="M0.200 0.200l1 1 1-1" stroke="#b4b4b4" stroke-width="0.45" fill="none"/></svg><svg style="position:absolute;left:889.90px;top:298.50px;" width="6.00" height="6.00" viewBox="0 0 6 6"><rect x="0.500" y="0.900" width="5" height="4.200" fill="none" stroke="#dedede" stroke-width="0.6"/><path d="M1 4.600l1.300-1.600 1 1 .8-.7 1 1.300z" fill="#dedede"/></svg><svg style="position:absolute;left:900.20px;top:298.50px;" width="6.00" height="6.00" viewBox="0 0 6 6"><circle cx="3" cy="3" r="2.200" fill="none" stroke="#dedede" stroke-width="0.6"/><path d="M3 0.800a2.200 2.200 0 0 0 0 4.400z" fill="#dedede"/><path d="M3 0.800a2.200 2.200 0 0 1 2.200 2.200H3z" fill="#dedede"/></svg><div class="t" style="left:910.70px;top:296.60px;font-size:7.40px;color:#dedede;font-weight:bold;font-family:'Liberation Serif',serif;">T</div><svg style="position:absolute;left:920.40px;top:298.50px;" width="6.00" height="6.00" viewBox="0 0 6 6"><rect x="1" y="1" width="4" height="4" fill="none" stroke="#dedede" stroke-width="0.6"/><path d="M0.300 0.300h1.400v1.400H0.300zM4.300 0.300h1.400v1.400H4.300zM0.300 4.300h1.400v1.400H0.300zM4.300 4.300h1.400v1.400H4.300z" fill="#dedede"/></svg><svg style="position:absolute;left:930.80px;top:298.50px;" width="6.00" height="6.00" viewBox="0 0 6 6"><path d="M1.800 0.500h2.200l1.300 1.300v3.700H1.800z" fill="#dedede"/><path d="M0.600 2.800h2.400v2.700H0.600z" fill="#dedede" stroke="#535353" stroke-width="0.4"/></svg><div style="position:absolute;left:943.50px;top:299.60px;width:2.80px;height:5.20px;background:#3a3a3a;border-radius:1.4px"></div><div style="position:absolute;left:943.20px;top:298.00px;width:3.40px;height:3.40px;background:#ececec;border-radius:1.7px"></div><div style="position:absolute;left:848.10px;top:310.00px;width:48.40px;height:7.50px;background:#454545;border-radius:0.5px"></div><div class="t" style="left:851.30px;top:308.40px;font-size:5.00px;color:#e0e0e0;letter-spacing:0.046px;">正片叠底</div><svg style="position:absolute;left:892.40px;top:313.10px;" width="2.60" height="1.80" viewBox="0 0 2.6 1.8"><path d="M0.200 0.200l1 1 1-1" stroke="#b4b4b4" stroke-width="0.45" fill="none"/></svg><div class="t" style="left:900.00px;top:308.40px;font-size:5.00px;color:#c6c6c6;letter-spacing:0.102px;">不透明度:</div><div style="position:absolute;left:924.00px;top:310.00px;width:16.00px;height:7.50px;background:#454545;"></div><div class="t" style="left:925.00px;top:308.40px;font-size:5.00px;color:#f2f2f2;letter-spacing:-0.405px;">99%</div><div style="position:absolute;left:941.00px;top:310.00px;width:4.80px;height:7.50px;background:#454545;"></div><svg style="position:absolute;left:942.10px;top:313.10px;" width="2.60" height="1.80" viewBox="0 0 2.6 1.8"><path d="M0.200 0.200l1 1 1-1" stroke="#b4b4b4" stroke-width="0.45" fill="none"/></svg><div class="t" style="left:848.50px;top:320.30px;font-size:5.00px;color:#c6c6c6;letter-spacing:0.036px;">锁定:</div><svg style="position:absolute;left:863.90px;top:322.60px;" width="6.00" height="6.00" viewBox="0 0 6 6"><rect x="0.700" y="0.700" width="4.600" height="4.600" fill="none" stroke="#9a9a9a" stroke-width="0.5" stroke-dasharray="0.8 0.6"/><path d="M2 2h1v1H2zM3 3h1v1H3z" fill="#9a9a9a"/></svg><svg style="position:absolute;left:873.50px;top:322.60px;" width="6.00" height="6.00" viewBox="0 0 6 6"><path d="M5.300 0.600L2.300 3.800l.7.700z" fill="#dedede"/><path d="M2.100 4.100l.6.600c-.4.700-1.200 1-1.900.9.400-.4.500-1 1.300-1.500z" fill="#dedede"/></svg><svg style="position:absolute;left:882.60px;top:322.90px;" width="5.40" height="5.40" viewBox="0 0 8 8"><path d="M4 0L5.500 1.900H4.500V3.500H6.100V2.500L8 4L6.100 5.500V4.500H4.500V6.100H5.500L4 8L2.500 6.100H3.500V4.500H1.900V5.500L0 4L1.900 2.500V3.500H3.500V1.900H2.500Z" fill="#dedede"/></svg><svg style="position:absolute;left:891.60px;top:322.60px;" width="6.00" height="6.00" viewBox="0 0 6 6"><rect x="0.800" y="1.400" width="4" height="3.800" fill="none" stroke="#dedede" stroke-width="0.6"/><path d="M3.400 0.600h2v2" fill="none" stroke="#dedede" stroke-width="0.6"/></svg><svg style="position:absolute;left:901.00px;top:322.60px;" width="6.00" height="6.00" viewBox="0 0 6 6"><rect x="1" y="2.600" width="4" height="3" rx="0.3" fill="#dedede"/><path d="M1.900 2.600V1.800a1.100 1.100 0 0 1 2.200 0v.8" fill="none" stroke="#dedede" stroke-width="0.6"/></svg><div class="t" style="left:910.00px;top:320.30px;font-size:5.00px;color:#c6c6c6;letter-spacing:0.036px;">填充:</div><div style="position:absolute;left:924.00px;top:321.90px;width:16.00px;height:7.50px;background:#454545;"></div><div class="t" style="left:924.80px;top:320.30px;font-size:5.00px;color:#f2f2f2;letter-spacing:-0.399px;">100%</div><div style="position:absolute;left:941.00px;top:321.90px;width:4.80px;height:7.50px;background:#454545;"></div><svg style="position:absolute;left:942.10px;top:325.00px;" width="2.60" height="1.80" viewBox="0 0 2.6 1.8"><path d="M0.200 0.200l1 1 1-1" stroke="#b4b4b4" stroke-width="0.45" fill="none"/></svg><div style="position:absolute;left:846.40px;top:332.60px;width:216.00px;height:254.90px;background:#4d4d4d;"></div><div style="position:absolute;left:1055.60px;top:332.60px;width:6.80px;height:69.00px;background:#535353;"></div><div style="position:absolute;left:846.40px;top:332.70px;width:209.20px;height:16.50px;background:#6a6a6a;"></div><div style="position:absolute;left:846.40px;top:332.70px;width:12.20px;height:16.50px;background:#535353;"></div><div style="position:absolute;left:858.50px;top:332.70px;width:0.50px;height:16.50px;background:#494949;"></div><svg style="position:absolute;left:849.70px;top:339.50px;" width="5.70" height="3.80" viewBox="0 0 6.6 4.4"><path d="M0.300 2.200C1.300 0.800 2.300 0.300 3.300 0.300S5.300 0.800 6.300 2.200C5.300 3.600 4.300 4.100 3.300 4.100S1.300 3.600 0.300 2.200z" fill="none" stroke="#e2e2e2" stroke-width="0.6"/><circle cx="3.300" cy="2.200" r="1" fill="#e2e2e2"/></svg><div class="t" style="left:889.00px;top:335.80px;font-size:5.00px;color:#ececec;letter-spacing:-0.255px;">Your Image Here</div><div style="position:absolute;left:846.40px;top:349.70px;width:209.20px;height:16.70px;background:#535353;"></div><div style="position:absolute;left:846.40px;top:349.70px;width:12.20px;height:16.70px;background:#535353;"></div><div style="position:absolute;left:858.50px;top:349.70px;width:0.50px;height:16.70px;background:#494949;"></div><svg style="position:absolute;left:849.70px;top:356.60px;" width="5.70" height="3.80" viewBox="0 0 6.6 4.4"><path d="M0.300 2.200C1.300 0.800 2.300 0.300 3.300 0.300S5.300 0.800 6.300 2.200C5.300 3.600 4.300 4.100 3.300 4.100S1.300 3.600 0.300 2.200z" fill="none" stroke="#e2e2e2" stroke-width="0.6"/><circle cx="3.300" cy="2.200" r="1" fill="#e2e2e2"/></svg><div class="t" style="left:873.20px;top:353.70px;font-size:5.00px;color:#dedede;letter-spacing:-0.276px;">Mock Up</div><div style="position:absolute;left:846.40px;top:366.90px;width:209.20px;height:16.90px;background:#535353;"></div><div style="position:absolute;left:846.40px;top:366.90px;width:12.20px;height:16.90px;background:#535353;"></div><div style="position:absolute;left:858.50px;top:366.90px;width:0.50px;height:16.90px;background:#494949;"></div><svg style="position:absolute;left:849.70px;top:373.90px;" width="5.70" height="3.80" viewBox="0 0 6.6 4.4"><path d="M0.300 2.200C1.300 0.800 2.300 0.300 3.300 0.300S5.300 0.800 6.300 2.200C5.300 3.600 4.300 4.100 3.300 4.100S1.300 3.600 0.300 2.200z" fill="none" stroke="#e2e2e2" stroke-width="0.6"/><circle cx="3.300" cy="2.200" r="1" fill="#e2e2e2"/></svg><div class="t" style="left:873.20px;top:371.00px;font-size:5.00px;color:#dedede;letter-spacing:-0.339px;">shadow</div><div style="position:absolute;left:846.40px;top:384.30px;width:209.20px;height:16.70px;background:#535353;"></div><div style="position:absolute;left:846.40px;top:384.30px;width:12.20px;height:16.70px;background:#535353;"></div><div style="position:absolute;left:858.50px;top:384.30px;width:0.50px;height:16.70px;background:#494949;"></div><svg style="position:absolute;left:849.70px;top:391.20px;" width="5.70" height="3.80" viewBox="0 0 6.6 4.4"><path d="M0.300 2.200C1.300 0.800 2.300 0.300 3.300 0.300S5.300 0.800 6.300 2.200C5.300 3.600 4.300 4.100 3.300 4.100S1.300 3.600 0.300 2.200z" fill="none" stroke="#e2e2e2" stroke-width="0.6"/><circle cx="3.300" cy="2.200" r="1" fill="#e2e2e2"/></svg><div class="t" style="left:873.20px;top:388.30px;font-size:5.00px;color:#dedede;letter-spacing:-0.340px;">Changeable Background</div><div style="position:absolute;left:859.30px;top:333.70px;width:11.60px;height:15.20px;background:none;border:0.55px solid #d4d4d4;box-sizing:border-box"></div><div style="position:absolute;left:860.90px;top:335.10px;width:8.30px;height:12.50px;background:#f4f4f4;"></div><svg style="position:absolute;left:860.90px;top:335.10px;" width="8.30" height="12.50" viewBox="0 0 8.3 12.5"><rect x="1.500" y="2.200" width="5.600" height="0.700" fill="#999"/><rect x="2.500" y="3.600" width="3.600" height="0.500" fill="#bbb"/><rect x="1.700" y="5.600" width="2.300" height="3.400" fill="#777"/><rect x="4.600" y="5.600" width="2.300" height="3.400" fill="#777"/><rect x="4.300" y="8.600" width="3.900" height="3.900" fill="#f4f4f4" stroke="#444" stroke-width="0.5"/><rect x="5.300" y="9.600" width="1.900" height="2.200" fill="#555"/></svg><svg style="position:absolute;left:871.40px;top:337.90px;" width="2.60" height="7.00" viewBox="0 0 2.6 7"><rect x="0.500" y="0.300" width="1.600" height="2.600" rx="0.8" fill="none" stroke="#d0d0d0" stroke-width="0.5"/><rect x="0.500" y="3.900" width="1.600" height="2.600" rx="0.8" fill="none" stroke="#d0d0d0" stroke-width="0.5"/><path d="M1.300 2.200v2.400" stroke="#d0d0d0" stroke-width="0.5"/></svg><div style="position:absolute;left:876.00px;top:335.00px;width:9.00px;height:12.50px;background:#000;"></div><div style="position:absolute;left:878.10px;top:337.90px;width:5.00px;height:5.60px;background:#fff;"></div><div style="position:absolute;left:860.60px;top:352.30px;width:8.80px;height:12.70px;background:#fafafa;"></div><svg style="position:absolute;left:860.60px;top:352.30px;" width="8.80" height="12.70" viewBox="0 0 8.8 12.7"><rect x="0" y="0" width="8.800" height="1.100" fill="#c9c9c9"/><rect x="0" y="3.300" width="0.900" height="2.800" fill="#222"/><rect x="7.900" y="3.300" width="0.900" height="2.800" fill="#222"/><rect x="0" y="1.100" width="0.900" height="2.200" fill="#e7d6cc"/><rect x="7.900" y="1.100" width="0.900" height="2.200" fill="#e7d6cc"/><rect x="0" y="11" width="8.800" height="1.700" fill="#cfcfcf"/><rect x="2.300" y="11" width="3.800" height="1.700" fill="#222"/></svg><div style="position:absolute;left:860.60px;top:369.30px;width:8.80px;height:12.70px;background:#f1f1f1;background:linear-gradient(to bottom,#f6f6f6,#e4e4e4)"></div><div style="position:absolute;left:863.00px;top:374.30px;width:4.40px;height:6.60px;background:none;background:linear-gradient(to bottom,rgba(150,150,150,0.35),rgba(140,140,140,0.95));filter:blur(0.6px)"></div><div style="position:absolute;left:860.60px;top:386.60px;width:8.80px;height:12.80px;background:#b5b5b5;"></div><div style="position:absolute;left:846.40px;top:587.50px;width:216.00px;height:10.50px;background:#535353;"></div><div style="position:absolute;left:846.40px;top:587.20px;width:216.00px;height:0.60px;background:#474747;"></div><svg style="position:absolute;left:976.20px;top:588.90px;" width="7.00" height="7.00" viewBox="0 0 7 7"><rect x="0.400" y="2.500" width="3.200" height="2" rx="1" fill="none" stroke="#878787" stroke-width="0.6"/><rect x="3.400" y="2.500" width="3.200" height="2" rx="1" fill="none" stroke="#878787" stroke-width="0.6"/></svg><div class="t" style="left:988.60px;top:586.90px;font-size:5.80px;color:#dcdcdc;font-style:italic;font-family:'Liberation Serif',serif;">fx</div><svg style="position:absolute;left:993.60px;top:594.60px;" width="1.40" height="1.40" viewBox="0 0 1.4 1.4"><path d="M1.300 0v1.300H0z" fill="#d0d0d0"/></svg><svg style="position:absolute;left:998.90px;top:588.90px;" width="7.00" height="7.00" viewBox="0 0 7 7"><rect x="0.500" y="1.200" width="6" height="4.400" rx="0.4" fill="#dcdcdc"/><circle cx="3.500" cy="3.400" r="1.300" fill="#535353"/></svg><svg style="position:absolute;left:1010.30px;top:588.90px;" width="7.00" height="7.00" viewBox="0 0 7 7"><circle cx="3.300" cy="3.500" r="2.300" fill="none" stroke="#dcdcdc" stroke-width="0.6"/><path d="M3.300 1.200a2.300 2.300 0 0 0-1.600 3.950L4.900 1.850A2.300 2.300 0 0 0 3.300 1.200z" fill="#dcdcdc"/></svg><svg style="position:absolute;left:1016.40px;top:594.60px;" width="1.40" height="1.40" viewBox="0 0 1.4 1.4"><path d="M1.300 0v1.300H0z" fill="#d0d0d0"/></svg><svg style="position:absolute;left:1021.70px;top:588.90px;" width="7.00" height="7.00" viewBox="0 0 7 7"><path d="M0.500 1.300h2.200l.7.800h3.100v3.900H0.500z" fill="#dcdcdc"/></svg><svg style="position:absolute;left:1033.30px;top:588.90px;" width="7.00" height="7.00" viewBox="0 0 7 7"><rect x="0.700" y="1" width="5.600" height="5" rx="0.4" fill="none" stroke="#dcdcdc" stroke-width="0.6"/><path d="M3.500 2.200v2.600M2.200 3.500h2.600" stroke="#dcdcdc" stroke-width="0.6"/></svg><svg style="position:absolute;left:1044.40px;top:588.90px;" width="7.00" height="7.00" viewBox="0 0 7 7"><path d="M1.300 2h4.400v4.200H1.300z" fill="#dcdcdc"/><path d="M0.800 1.400h5.400" stroke="#dcdcdc" stroke-width="0.6"/><path d="M2.700 1.400V0.700h1.600v.7" fill="none" stroke="#dcdcdc" stroke-width="0.5"/><path d="M2.600 2.900v2.500M4.400 2.900v2.500" stroke="#535353" stroke-width="0.45"/></svg>
</div>
</body></html>
